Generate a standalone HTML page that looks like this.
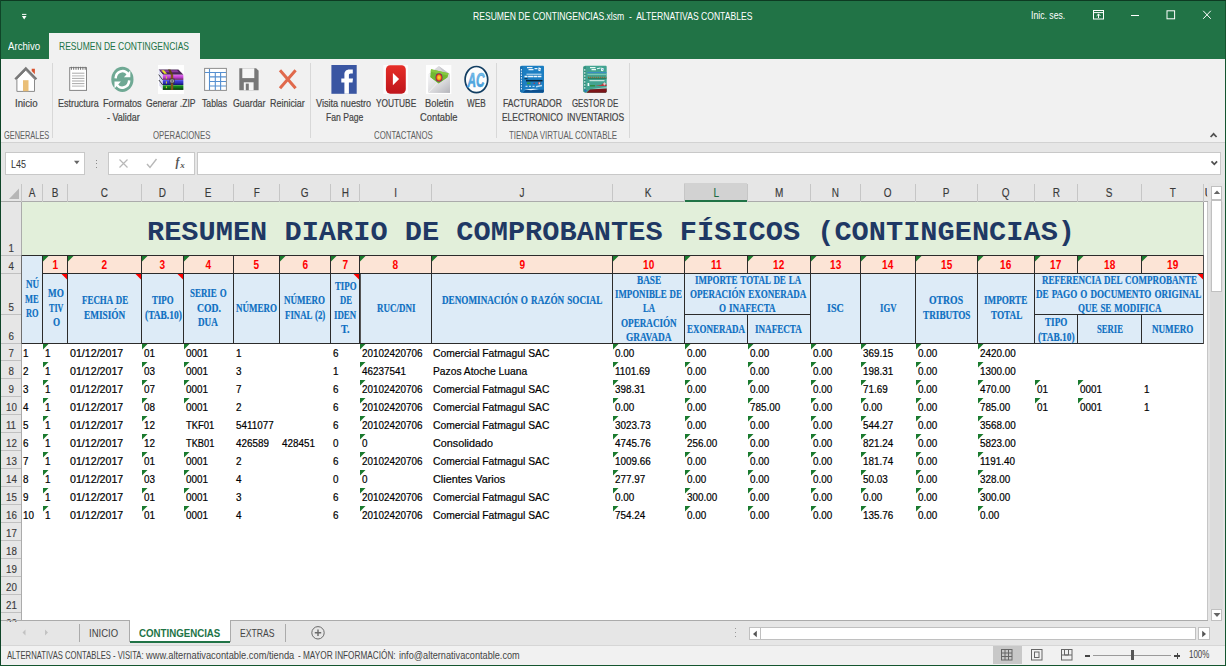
<!DOCTYPE html>
<html lang="es"><head><meta charset="utf-8"><title>RESUMEN DE CONTINGENCIAS</title>
<style>
html,body{margin:0;padding:0}
body{width:1226px;height:666px;position:relative;overflow:hidden;background:#f1f1f1;font-family:"Liberation Sans",sans-serif}
body>div,body>span,body>svg{position:absolute}
.t{white-space:pre;transform-origin:0 50%;display:block}
.s{font-family:"Liberation Sans",sans-serif}
.sb{font-family:"Liberation Sans",sans-serif;font-weight:700}
.r{font-family:"Liberation Serif",serif}
.rb{font-family:"Liberation Serif",serif;font-weight:700}
.m{font-family:"Liberation Mono",monospace}
.mb{font-family:"Liberation Mono",monospace;font-weight:700}
</style></head>
<body>
<div style="left:0px;top:0px;width:1226px;height:60px;background:#217346;"></div>
<div style="left:0px;top:0px;width:1226px;height:1px;background:#0d3a22;"></div>
<div style="left:49px;top:33px;width:151px;height:27px;background:#f1f1f1;"></div>
<div style="left:0px;top:59px;width:1226px;height:84px;background:#f1f1f1;"></div>
<div style="left:0px;top:142px;width:1226px;height:1px;background:#d2d2d2;"></div>
<div style="left:0px;top:143px;width:1226px;height:40px;background:#e6e6e6;"></div>
<div style="left:0px;top:183px;width:1226px;height:19px;background:#e6e6e6;"></div>
<div style="left:0px;top:202px;width:22px;height:418px;background:#e6e6e6;"></div>
<div style="left:22px;top:202px;width:1186px;height:418px;background:#fff;"></div>
<div style="left:1208px;top:183px;width:18px;height:437px;background:#e4e4e4;"></div>
<div style="left:0px;top:620px;width:1226px;height:26px;background:#e6e6e6;"></div>
<div style="left:0px;top:645px;width:1226px;height:21px;background:#f1f1f1;"></div>
<span class="t s" style="left:472.60px;top:9px;font-size:11.5px;line-height:15px;color:#fff;transform:scaleX(0.7466);">RESUMEN DE CONTINGENCIAS.xlsm  -  ALTERNATIVAS CONTABLES</span>
<span class="t s" style="left:1030.80px;top:8px;font-size:11.5px;line-height:15px;color:#fff;transform:scaleX(0.7537);">Inic. ses.</span>
<svg style="left:19px;top:11px" width="10" height="10" viewBox="0 0 10 10"><path d="M3 3.400h4.400" stroke="#fff" stroke-width="1" fill="none"/><path d="M2.900 5h4.600L5.200 8.400z" fill="#fff"/></svg>
<svg style="left:1090px;top:7px" width="130" height="16" viewBox="0 0 130 16" fill="none" stroke="#fff" stroke-width="1"><rect x="3.5" y="3.5" width="10" height="8.5"/><path d="M3.5 5.6h10"/><path d="M8.5 11V7.2M6.6 8.9l1.9-1.9 1.9 1.9"/><path d="M41 8.5h8"/><rect x="77" y="3.8" width="7.6" height="8"/><path d="M113.2 3.8l7.6 8M120.8 3.8l-7.6 8"/></svg>
<span class="t s" style="left:8.20px;top:39px;font-size:11.5px;line-height:15px;color:#fff;transform:scaleX(0.8371);">Archivo</span>
<span class="t s" style="left:59.20px;top:39px;font-size:11.5px;line-height:15px;color:#217346;transform:scaleX(0.7398);">RESUMEN DE CONTINGENCIAS</span>
<span class="t s" style="left:14.50px;top:96px;font-size:11px;line-height:14px;color:#444444;transform:scaleX(0.8762);-webkit-text-stroke:.2px #444;">Inicio</span>
<span class="t s" style="left:57.70px;top:96px;font-size:11px;line-height:14px;color:#444444;transform:scaleX(0.8119);-webkit-text-stroke:.2px #444;">Estructura</span>
<span class="t s" style="left:103.30px;top:96px;font-size:11px;line-height:14px;color:#444444;transform:scaleX(0.8331);-webkit-text-stroke:.2px #444;">Formatos</span>
<span class="t s" style="left:106.70px;top:110px;font-size:11px;line-height:14px;color:#444444;transform:scaleX(0.8146);-webkit-text-stroke:.2px #444;">- Validar</span>
<span class="t s" style="left:146.20px;top:96px;font-size:11px;line-height:14px;color:#444444;transform:scaleX(0.7801);-webkit-text-stroke:.2px #444;">Generar .ZIP</span>
<span class="t s" style="left:202.40px;top:96px;font-size:11px;line-height:14px;color:#444444;transform:scaleX(0.7862);-webkit-text-stroke:.2px #444;">Tablas</span>
<span class="t s" style="left:233.20px;top:96px;font-size:11px;line-height:14px;color:#444444;transform:scaleX(0.8029);-webkit-text-stroke:.2px #444;">Guardar</span>
<span class="t s" style="left:270.00px;top:96px;font-size:11px;line-height:14px;color:#444444;transform:scaleX(0.8132);-webkit-text-stroke:.2px #444;">Reiniciar</span>
<span class="t s" style="left:315.80px;top:96px;font-size:11px;line-height:14px;color:#444444;transform:scaleX(0.8307);-webkit-text-stroke:.2px #444;">Visita nuestro</span>
<span class="t s" style="left:325.70px;top:110px;font-size:11px;line-height:14px;color:#444444;transform:scaleX(0.7820);-webkit-text-stroke:.2px #444;">Fan Page</span>
<span class="t s" style="left:375.80px;top:96px;font-size:11px;line-height:14px;color:#444444;transform:scaleX(0.7560);-webkit-text-stroke:.2px #444;">YOUTUBE</span>
<span class="t s" style="left:424.60px;top:96px;font-size:11px;line-height:14px;color:#444444;transform:scaleX(0.8503);-webkit-text-stroke:.2px #444;">Boletin</span>
<span class="t s" style="left:420.30px;top:110px;font-size:11px;line-height:14px;color:#444444;transform:scaleX(0.8494);-webkit-text-stroke:.2px #444;">Contable</span>
<span class="t s" style="left:466.90px;top:96px;font-size:11px;line-height:14px;color:#444444;transform:scaleX(0.7423);-webkit-text-stroke:.2px #444;">WEB</span>
<span class="t s" style="left:503.20px;top:96px;font-size:11px;line-height:14px;color:#444444;transform:scaleX(0.7759);-webkit-text-stroke:.2px #444;">FACTURADOR</span>
<span class="t s" style="left:501.60px;top:110px;font-size:11px;line-height:14px;color:#444444;transform:scaleX(0.7652);-webkit-text-stroke:.2px #444;">ELECTRONICO</span>
<span class="t s" style="left:571.90px;top:96px;font-size:11px;line-height:14px;color:#444444;transform:scaleX(0.7153);-webkit-text-stroke:.2px #444;">GESTOR DE</span>
<span class="t s" style="left:566.60px;top:110px;font-size:11px;line-height:14px;color:#444444;transform:scaleX(0.7742);-webkit-text-stroke:.2px #444;">INVENTARIOS</span>
<span class="t s" style="left:4.00px;top:128px;font-size:10.5px;line-height:14px;color:#606060;transform:scaleX(0.7057);">GENERALES</span>
<span class="t s" style="left:152.80px;top:128px;font-size:10.5px;line-height:14px;color:#606060;transform:scaleX(0.7453);">OPERACIONES</span>
<span class="t s" style="left:374.20px;top:128px;font-size:10.5px;line-height:14px;color:#606060;transform:scaleX(0.7448);">CONTACTANOS</span>
<span class="t s" style="left:508.50px;top:128px;font-size:10.5px;line-height:14px;color:#606060;transform:scaleX(0.7541);">TIENDA VIRTUAL CONTABLE</span>
<div style="left:52px;top:63px;width:1px;height:75px;background:#d8d8d8;"></div>
<div style="left:310px;top:63px;width:1px;height:75px;background:#d8d8d8;"></div>
<div style="left:496px;top:63px;width:1px;height:75px;background:#d8d8d8;"></div>
<div style="left:629px;top:63px;width:1px;height:75px;background:#d8d8d8;"></div>
<svg style="left:1209px;top:131px" width="10" height="8" viewBox="0 0 10 8"><path d="M1.600 6l3-3.200 3 3.200" stroke="#505050" stroke-width="1.700" fill="none"/></svg>
<svg style="left:13px;top:65px" width="27" height="29" viewBox="0 0 27 29">
<path d="M18.700 3.700h3.200v5.500l-3.200-3.200z" fill="#d9532e"/>
<path d="M3.900 14.200V26.400h17.600V14.200L12.800 5.200z" fill="#fff" stroke="#8a8a8a" stroke-width="1"/>
<path d="M2.200 14.300L12.800 3.500l10.600 10.800" fill="none" stroke="#787878" stroke-width="2.300"/>
<rect x="10" y="15.200" width="5.500" height="11" fill="#eabf78"/>
</svg>
<svg style="left:68px;top:65px" width="21" height="28" viewBox="0 0 21 28">
<rect x="1.700" y="2.600" width="16.800" height="22.800" fill="#fff" stroke="#858585" stroke-width="1"/>
<path d="M3.400 1.800v3M5.700 1.800v3M8 1.800v3M10.300 1.800v3M12.600 1.800v3M14.900 1.800v3M17.200 1.800v3" stroke="#6f6f6f" stroke-width="1"/>
<path d="M4 8.200h12.400M4 13.400h12.400M4 18.600h12.400" stroke="#9f9f9f" stroke-width="0.9"/>
<path d="M4 10.800h12.400M4 16h12.400M4 21.200h12.400" stroke="#c4c4c4" stroke-width="1.300"/>
</svg>
<svg style="left:110px;top:66px" width="25" height="27" viewBox="0 0 25 27">
<ellipse cx="12.400" cy="13.400" rx="11.100" ry="12.600" fill="#6fa994"/>
<g fill="none" stroke="#fff" stroke-width="2.500">
<path d="M5.600 12.400a6.900 7.600 0 0 1 12.400-4.200"/>
<path d="M19.200 14.400a6.900 7.600 0 0 1-12.400 4.200"/>
</g>
<path d="M20.300 4.400v6.800h-6.400z" fill="#fff"/>
<path d="M4.500 22.400v-6.800h6.400z" fill="#fff"/>
</svg>
<svg style="left:158px;top:65px" width="26" height="29" viewBox="0 0 26 29">
<defs>
<linearGradient id="wp" x1="0" y1="0" x2="0" y2="1"><stop offset="0" stop-color="#e468f4"/><stop offset=".55" stop-color="#b83cc8"/><stop offset="1" stop-color="#5a2660"/></linearGradient>
<linearGradient id="wb" x1="0" y1="0" x2="0" y2="1"><stop offset="0" stop-color="#4a48e8"/><stop offset=".6" stop-color="#2c2cb8"/><stop offset="1" stop-color="#161660"/></linearGradient>
<linearGradient id="wg" x1="0" y1="0" x2="0" y2="1"><stop offset="0" stop-color="#1a9a20"/><stop offset=".6" stop-color="#0e6a14"/><stop offset="1" stop-color="#042c06"/></linearGradient>
</defs>
<rect width="26" height="29" fill="#fefefe"/>
<path d="M.6 4.600h19.800l5 5.200H4.800z" fill="#4b2458"/>
<path d="M2.200 5.200h16.800l1.800 2H4z" fill="#8a3aa0"/>
<path d="M.6 4.600l4.200 5.200v15.100L1.300 20.600z" fill="#d8d8ee"/>
<path d="M.7 9.600l4 5.300M.9 15l3.800 5" stroke="#333" stroke-width=".9"/>
<rect x="4.800" y="9.800" width="20.600" height="5.100" fill="url(#wp)"/>
<rect x="4.800" y="15.100" width="20.600" height="4.900" fill="url(#wb)"/>
<rect x="4.800" y="20.200" width="20.600" height="4.700" fill="url(#wg)"/>
<path d="M3.400 5.300h2.600l3 3.400H6.200z" fill="#e4e420"/>
<path d="M8.400 11.400v2.200M8.400 16.400v2.200M8.400 21.400v1.800" stroke="#d8d83a" stroke-width="1"/>
<path d="M10 4.600h2.400l2.800 5.200h-2.400z" fill="#5e4410"/>
<rect x="12.800" y="9.800" width="2.400" height="15.100" fill="#83561a"/>
<rect x="12" y="14.100" width="4.100" height="3.800" fill="#d4d4dc" stroke="#2a2a2a" stroke-width=".8"/>
<rect x="13.300" y="15.200" width="1.600" height="1.600" fill="#444"/>
</svg>
<svg style="left:203px;top:67px" width="25" height="25" viewBox="0 0 25 25">
<rect x="1.600" y="1.400" width="21.800" height="22" fill="#fff" stroke="#8e8e8e" stroke-width="1"/>
<path d="M6.500 2v21M12.300 5.500v17.500M17.600 5.500v17.500" stroke="#558fd0" stroke-width="1.100"/>
<path d="M2 5.500h21M6.500 9.900h16.500M6.500 14.500h16.500M6.500 19h16.500" stroke="#558fd0" stroke-width="1.100"/>
</svg>
<svg style="left:238px;top:67px" width="22" height="25" viewBox="0 0 22 25">
<path d="M1.300 1.300h16.800l2.500 2.500v19.400H1.300z" fill="#787878"/>
<rect x="4.300" y="1.300" width="12" height="9.800" fill="#f6f6f6"/>
<rect x="5.800" y="15.300" width="9.800" height="7.900" fill="#f6f6f6"/>
<rect x="7.800" y="16.600" width="3" height="6.600" fill="#787878"/>
</svg>
<svg style="left:277px;top:67px" width="22" height="24" viewBox="0 0 22 24">
<path d="M3 3.200l15.600 18M18.600 3.200L3 21.200" stroke="#e0694c" stroke-width="3" fill="none"/>
</svg>
<svg style="left:331px;top:65px" width="26" height="29" viewBox="0 0 26 29">
<rect x=".4" width="25.300" height="28.800" fill="#3a56a2"/>
<path d="M21.800 4.400h-3.300c-3.600 0-5.100 2.100-5.100 5.100v4h-3.100v4.100h3.100V28.800h4.500V17.600h3.600l.5-4.100h-4.100V10.400c0-1.200.4-1.900 1.700-1.900h2.200z" fill="#fff"/>
</svg>
<svg style="left:383px;top:65px" width="25" height="29" viewBox="0 0 25 29">
<defs><linearGradient id="yt" x1="0" y1="0" x2="0" y2="1"><stop offset="0" stop-color="#e62e28"/><stop offset="1" stop-color="#bf151b"/></linearGradient></defs>
<rect x=".4" width="24.600" height="29" fill="#fcfcfc"/>
<rect x="2.900" y="0.200" width="19.900" height="28.500" rx="4.200" ry="4.600" fill="url(#yt)"/>
<path d="M9.900 8v12.200l6.200-6.100z" fill="#fff"/>
</svg>
<svg style="left:426px;top:65px" width="26" height="29" viewBox="0 0 26 29">
<defs><linearGradient id="env" x1="0" y1="0" x2="1" y2="1"><stop offset="0" stop-color="#f4f4f6"/><stop offset=".5" stop-color="#dcdcdf"/><stop offset="1" stop-color="#b4b4ba"/></linearGradient>
<radialGradient id="sun"><stop offset="0" stop-color="#ffe63a"/><stop offset=".5" stop-color="#f59a1c"/><stop offset=".8" stop-color="#c8282c"/><stop offset="1" stop-color="#6a2a7a"/></radialGradient></defs>
<rect width="25.300" height="29" fill="#fefefe"/>
<path d="M2.300 9.500L12.700 1.100 24 9.300v4z" fill="#d9d9dc"/>
<path d="M12.700 1.100L24 9.300 18 8.200z" fill="#c6c6ca"/>
<path d="M2.300 8.800h21.700v18.900H2.300z" fill="url(#env)"/>
<path d="M5 4.300l17.500 4-1 4.800-8.900 5.700-8.400-6.500z" fill="#72b832"/>
<path d="M5 4.300l17.500 4-.5 2.300L4.700 6.800z" fill="#86c840"/>
<ellipse cx="13" cy="12.500" rx="3.500" ry="4.300" fill="url(#sun)"/>
<path d="M2.300 11l10.300 7.800L24 10.800V27.700H2.300z" fill="url(#env)"/>
<path d="M2.300 27.700l8.800-9.500" stroke="#f4f4f4" stroke-width=".8" fill="none"/>
</svg>
<svg style="left:463px;top:64px" width="27" height="31" viewBox="0 0 27 31">
<defs><linearGradient id="ac" x1="0" y1="0" x2="0" y2="1"><stop offset="0" stop-color="#8ccaee"/><stop offset="1" stop-color="#3292d6"/></linearGradient></defs>
<ellipse cx="13.400" cy="15.600" rx="11.300" ry="13.100" fill="#fdfdfd" stroke="#123e62" stroke-width="1.700"/>
<text x="4.600" y="22.500" font-family="Liberation Sans, sans-serif" font-weight="700" font-style="italic" font-size="20" fill="url(#ac)" stroke="#4ea4de" stroke-width=".7" textLength="17" lengthAdjust="spacingAndGlyphs">AC</text>
</svg>
<svg style="left:519px;top:65px" width="26" height="29" viewBox="0 0 26 29">
<path d="M1 1.800l1.600-1h21.700l.7.800v25.200l-.8.900H2.400L1 26.600z" fill="#1c7ec2"/>
<path d="M1 1.800l2.600-.6v26.200L1 26.600z" fill="#1a70b0"/>
<path d="M2.400 4v21" stroke="#e6f2fb" stroke-width="1" stroke-dasharray="1.600 1.100"/>
<path d="M8 2.600h5.500M9.500 4.600h5M15.500 3.600h3" stroke="#e6f2fb" stroke-width="1.100"/>
<path d="M19.600 2.200l2.500 1.400-.8 2.600-2-.4z" fill="#fff"/><path d="M20.400 3.800l1 .6-.4 1z" fill="#0c4a80"/>
<path d="M7.500 9.200h15" stroke="#cfe6f6" stroke-width="1"/>
<path d="M5.500 11.600h17.500" stroke="#f2f8fc" stroke-width="1.500" stroke-dasharray="3 .6 5 .4 4 .5"/>
<path d="M5.500 13.700h3" stroke="#0a2a44" stroke-width="1"/>
<path d="M7 15.700h16.500" stroke="#08243a" stroke-width="1.500"/>
<path d="M8 18.300h3.500" stroke="#2f9a4a" stroke-width="1.800"/><path d="M14.600 18.300h1.200" stroke="#b0343c" stroke-width="1.300"/><path d="M19.200 18.300h2.200" stroke="#e04038" stroke-width="2"/><path d="M19.900 17.600h.8v1.600h-.8z" fill="#fff"/>
<path d="M6.500 21.400h2M10 21.400h2M13.500 21.400h2M17 21.700l6-1.200" stroke="#b8daf2" stroke-width="1.400"/>
<path d="M3.600 27.700l3.400-3h17.800v2.100l-.8.900z" fill="#0c4f8e"/>
<path d="M5 24.400l9-.6 6 .2-8 1.300z" fill="#eaf4fb"/>
</svg>
<svg style="left:582px;top:65px" width="26" height="29" viewBox="0 0 26 29">
<path d="M1.400 1.800l1.600-1h21l.7.800v25.200l-.8.900H2.800l-1.400-1.100z" fill="#42a391"/>
<path d="M1.400 1.800l2.600-.6v26.200l-2.600-.8z" fill="#36917f"/>
<path d="M2.800 4v20" stroke="#e4f5f0" stroke-width="1" stroke-dasharray="1.800 1.200"/>
<path d="M8 2.600h5.500M9.500 4.600h4.500M15 3.800l3.500-.8" stroke="#e8f7f3" stroke-width="1.100"/>
<path d="M19.400 2.400l2.600 1.300-1 2.600-2-.5z" fill="#fff"/><path d="M20.200 3.800l1.200.5-.5 1.100z" fill="#2a70c8"/>
<path d="M5.500 7.600h19" stroke="#3a86d0" stroke-width=".9"/>
<path d="M5.500 9.400h19" stroke="#7cc6b6" stroke-width="1.200"/>
<path d="M6 12.400h18.500" stroke="#8a6a3a" stroke-width="1.300" stroke-dasharray="1.200 .8"/>
<path d="M6 13.600h18.500" stroke="#2a7a5a" stroke-width="1"/>
<path d="M7.500 15.700h15" stroke="#e0f4ee" stroke-width="1"/>
<path d="M5.600 18h1.600v3H5.600z" fill="#f2faf8"/>
<path d="M8 20.800h5" stroke="#2e8a3a" stroke-width="1.400"/>
<path d="M13 20.900l6-.9 3-2.200.8 1.400 1.800.2v1.600z" fill="#b8383c"/>
<path d="M22.400 17.400v3M21 18.900h3" stroke="#f4d8d8" stroke-width=".9"/>
<path d="M10 23.600l14.600-1.200v1.200z" fill="#eaf7f3"/>
<path d="M4.400 27.700l3.600-3.200 16.700-1v3.300l-.8.900z" fill="#7d1519"/>
<path d="M2.600 24.200l2.400 1.200-1.200 1.600-1.200-.6z" fill="#2a70c8"/>
</svg>
<div style="left:5px;top:152px;width:80px;height:23px;background:#fff;border:1px solid #c8c8c8;box-sizing:border-box;"></div>
<span class="t s" style="left:10.80px;top:157px;font-size:11.5px;line-height:15px;color:#333;transform:scaleX(0.7818);">L45</span>
<svg style="left:73px;top:160px" width="8" height="5" viewBox="0 0 8 5"><path d="M1 .8h5.600L3.800 4.200z" fill="#666"/></svg>
<div style="left:96px;top:160px;width:1px;height:1px;background:#8a8a8a;"></div>
<div style="left:96px;top:163px;width:1px;height:1px;background:#8a8a8a;"></div>
<div style="left:96px;top:167px;width:1px;height:1px;background:#8a8a8a;"></div>
<div style="left:108px;top:152px;width:87px;height:23px;background:#fff;border:1px solid #c8c8c8;box-sizing:border-box;"></div>
<svg style="left:118px;top:157px" width="70" height="13" viewBox="0 0 70 13" fill="none"><path d="M1.5 2.5l8 8M9.5 2.5l-8 8" stroke="#b8b8b8" stroke-width="1.2"/><path d="M29 7l3 3.5 6.5-8.5" stroke="#b8b8b8" stroke-width="1.4"/></svg>
<span class="t rb" style="left:175.60px;top:155px;font-size:11.5px;line-height:15px;color:#555;font-style:italic;">f</span>
<span class="t rb" style="left:180.20px;top:159px;font-size:9px;line-height:12px;color:#555;font-style:italic;">x</span>
<div style="left:197px;top:152px;width:1024px;height:23px;background:#fff;border:1px solid #c8c8c8;box-sizing:border-box;"></div>
<svg style="left:1209px;top:159px" width="10" height="8" viewBox="0 0 10 8"><path d="M2.500 2.300l2.800 3 2.800-3" stroke="#505050" stroke-width="1.700" fill="none"/></svg>
<div style="left:684px;top:183px;width:63px;height:18px;background:#d2d2d2;"></div>
<div style="left:0px;top:201px;width:1208px;height:1px;background:#ababab;"></div>
<div style="left:684px;top:200px;width:63px;height:2px;background:#217346;"></div>
<div style="left:21px;top:184px;width:1px;height:18px;background:#c6c6c6;"></div>
<span class="t s" style="left:27.93px;top:185px;font-size:12.2px;line-height:16px;color:#3a3a3a;transform:scaleX(.82);transform-origin:50% 50%;-webkit-text-stroke:.15px #3a3a3a;">A</span>
<div style="left:42px;top:184px;width:1px;height:18px;background:#c6c6c6;"></div>
<span class="t s" style="left:50.93px;top:185px;font-size:12.2px;line-height:16px;color:#3a3a3a;transform:scaleX(.82);transform-origin:50% 50%;-webkit-text-stroke:.15px #3a3a3a;">B</span>
<div style="left:67px;top:184px;width:1px;height:18px;background:#c6c6c6;"></div>
<span class="t s" style="left:100.09px;top:185px;font-size:12.2px;line-height:16px;color:#3a3a3a;transform:scaleX(.82);transform-origin:50% 50%;-webkit-text-stroke:.15px #3a3a3a;">C</span>
<div style="left:141px;top:184px;width:1px;height:18px;background:#c6c6c6;"></div>
<span class="t s" style="left:158.09px;top:185px;font-size:12.2px;line-height:16px;color:#3a3a3a;transform:scaleX(.82);transform-origin:50% 50%;-webkit-text-stroke:.15px #3a3a3a;">D</span>
<div style="left:183px;top:184px;width:1px;height:18px;background:#c6c6c6;"></div>
<span class="t s" style="left:204.43px;top:185px;font-size:12.2px;line-height:16px;color:#3a3a3a;transform:scaleX(.82);transform-origin:50% 50%;-webkit-text-stroke:.15px #3a3a3a;">E</span>
<div style="left:233px;top:184px;width:1px;height:18px;background:#c6c6c6;"></div>
<span class="t s" style="left:252.77px;top:185px;font-size:12.2px;line-height:16px;color:#3a3a3a;transform:scaleX(.82);transform-origin:50% 50%;-webkit-text-stroke:.15px #3a3a3a;">F</span>
<div style="left:279px;top:184px;width:1px;height:18px;background:#c6c6c6;"></div>
<span class="t s" style="left:300.26px;top:185px;font-size:12.2px;line-height:16px;color:#3a3a3a;transform:scaleX(.82);transform-origin:50% 50%;-webkit-text-stroke:.15px #3a3a3a;">G</span>
<div style="left:330px;top:184px;width:1px;height:18px;background:#c6c6c6;"></div>
<span class="t s" style="left:340.59px;top:185px;font-size:12.2px;line-height:16px;color:#3a3a3a;transform:scaleX(.82);transform-origin:50% 50%;-webkit-text-stroke:.15px #3a3a3a;">H</span>
<div style="left:359px;top:184px;width:1px;height:18px;background:#c6c6c6;"></div>
<span class="t s" style="left:393.81px;top:185px;font-size:12.2px;line-height:16px;color:#3a3a3a;transform:scaleX(.82);transform-origin:50% 50%;-webkit-text-stroke:.15px #3a3a3a;">I</span>
<div style="left:431px;top:184px;width:1px;height:18px;background:#c6c6c6;"></div>
<span class="t s" style="left:518.95px;top:185px;font-size:12.2px;line-height:16px;color:#3a3a3a;transform:scaleX(.82);transform-origin:50% 50%;-webkit-text-stroke:.15px #3a3a3a;">J</span>
<div style="left:612px;top:184px;width:1px;height:18px;background:#c6c6c6;"></div>
<span class="t s" style="left:644.43px;top:185px;font-size:12.2px;line-height:16px;color:#3a3a3a;transform:scaleX(.82);transform-origin:50% 50%;-webkit-text-stroke:.15px #3a3a3a;">K</span>
<div style="left:684px;top:184px;width:1px;height:18px;background:#c6c6c6;"></div>
<span class="t s" style="left:712.61px;top:185px;font-size:12.2px;line-height:16px;color:#1e6b41;transform:scaleX(.82);transform-origin:50% 50%;-webkit-text-stroke:.15px #1e6b41;">L</span>
<div style="left:747px;top:184px;width:1px;height:18px;background:#c6c6c6;"></div>
<span class="t s" style="left:773.92px;top:185px;font-size:12.2px;line-height:16px;color:#3a3a3a;transform:scaleX(.82);transform-origin:50% 50%;-webkit-text-stroke:.15px #3a3a3a;">M</span>
<div style="left:810px;top:184px;width:1px;height:18px;background:#c6c6c6;"></div>
<span class="t s" style="left:831.09px;top:185px;font-size:12.2px;line-height:16px;color:#3a3a3a;transform:scaleX(.82);transform-origin:50% 50%;-webkit-text-stroke:.15px #3a3a3a;">N</span>
<div style="left:860px;top:184px;width:1px;height:18px;background:#c6c6c6;"></div>
<span class="t s" style="left:883.26px;top:185px;font-size:12.2px;line-height:16px;color:#3a3a3a;transform:scaleX(.82);transform-origin:50% 50%;-webkit-text-stroke:.15px #3a3a3a;">O</span>
<div style="left:915px;top:184px;width:1px;height:18px;background:#c6c6c6;"></div>
<span class="t s" style="left:942.43px;top:185px;font-size:12.2px;line-height:16px;color:#3a3a3a;transform:scaleX(.82);transform-origin:50% 50%;-webkit-text-stroke:.15px #3a3a3a;">P</span>
<div style="left:977px;top:184px;width:1px;height:18px;background:#c6c6c6;"></div>
<span class="t s" style="left:1001.26px;top:185px;font-size:12.2px;line-height:16px;color:#3a3a3a;transform:scaleX(.82);transform-origin:50% 50%;-webkit-text-stroke:.15px #3a3a3a;">Q</span>
<div style="left:1034px;top:184px;width:1px;height:18px;background:#c6c6c6;"></div>
<span class="t s" style="left:1051.59px;top:185px;font-size:12.2px;line-height:16px;color:#3a3a3a;transform:scaleX(.82);transform-origin:50% 50%;-webkit-text-stroke:.15px #3a3a3a;">R</span>
<div style="left:1077px;top:184px;width:1px;height:18px;background:#c6c6c6;"></div>
<span class="t s" style="left:1105.43px;top:185px;font-size:12.2px;line-height:16px;color:#3a3a3a;transform:scaleX(.82);transform-origin:50% 50%;-webkit-text-stroke:.15px #3a3a3a;">S</span>
<div style="left:1141px;top:184px;width:1px;height:18px;background:#c6c6c6;"></div>
<span class="t s" style="left:1168.77px;top:185px;font-size:12.2px;line-height:16px;color:#3a3a3a;transform:scaleX(.82);transform-origin:50% 50%;-webkit-text-stroke:.15px #3a3a3a;">T</span>
<div style="left:1203px;top:184px;width:1px;height:18px;background:#c6c6c6;"></div>
<div style="left:1207px;top:202px;width:1px;height:418px;background:#c6c6c6;"></div>
<span class="t s" style="left:1204.60px;top:185px;font-size:12.2px;line-height:16px;color:#3a3a3a;clip-path:inset(0 6.200px 0 0);">U</span>
<svg style="left:8px;top:187px" width="12" height="13" viewBox="0 0 12 13"><path d="M11 1.500v10.500H1z" fill="#b6b6b6"/></svg>
<div style="left:21px;top:202px;width:1px;height:418px;background:#ababab;"></div>
<div style="left:1px;top:255px;width:20px;height:1px;background:#c0c0c0;"></div>
<span class="t s" style="left:7.80px;top:241px;font-size:11.5px;line-height:15px;color:#3a3a3a;transform:scaleX(.85);transform-origin:50% 50%;-webkit-text-stroke:.15px #3a3a3a;">1</span>
<div style="left:1px;top:273px;width:20px;height:1px;background:#c0c0c0;"></div>
<span class="t s" style="left:7.80px;top:259px;font-size:11.5px;line-height:15px;color:#3a3a3a;transform:scaleX(.85);transform-origin:50% 50%;-webkit-text-stroke:.15px #3a3a3a;">4</span>
<div style="left:1px;top:314px;width:20px;height:1px;background:#c0c0c0;"></div>
<span class="t s" style="left:7.80px;top:300px;font-size:11.5px;line-height:15px;color:#3a3a3a;transform:scaleX(.85);transform-origin:50% 50%;-webkit-text-stroke:.15px #3a3a3a;">5</span>
<div style="left:1px;top:343px;width:20px;height:1px;background:#c0c0c0;"></div>
<span class="t s" style="left:7.80px;top:329px;font-size:11.5px;line-height:15px;color:#3a3a3a;transform:scaleX(.85);transform-origin:50% 50%;-webkit-text-stroke:.15px #3a3a3a;">6</span>
<div style="left:1px;top:360px;width:20px;height:1px;background:#c0c0c0;"></div>
<span class="t s" style="left:7.80px;top:346px;font-size:11.5px;line-height:15px;color:#3a3a3a;transform:scaleX(.85);transform-origin:50% 50%;-webkit-text-stroke:.15px #3a3a3a;">7</span>
<div style="left:1px;top:378px;width:20px;height:1px;background:#c0c0c0;"></div>
<span class="t s" style="left:7.80px;top:364px;font-size:11.5px;line-height:15px;color:#3a3a3a;transform:scaleX(.85);transform-origin:50% 50%;-webkit-text-stroke:.15px #3a3a3a;">8</span>
<div style="left:1px;top:396px;width:20px;height:1px;background:#c0c0c0;"></div>
<span class="t s" style="left:7.80px;top:382px;font-size:11.5px;line-height:15px;color:#3a3a3a;transform:scaleX(.85);transform-origin:50% 50%;-webkit-text-stroke:.15px #3a3a3a;">9</span>
<div style="left:1px;top:414px;width:20px;height:1px;background:#c0c0c0;"></div>
<span class="t s" style="left:4.60px;top:400px;font-size:11.5px;line-height:15px;color:#3a3a3a;transform:scaleX(.85);transform-origin:50% 50%;-webkit-text-stroke:.15px #3a3a3a;">10</span>
<div style="left:1px;top:432px;width:20px;height:1px;background:#c0c0c0;"></div>
<span class="t s" style="left:5.03px;top:418px;font-size:11.5px;line-height:15px;color:#3a3a3a;transform:scaleX(.85);transform-origin:50% 50%;-webkit-text-stroke:.15px #3a3a3a;">11</span>
<div style="left:1px;top:450px;width:20px;height:1px;background:#c0c0c0;"></div>
<span class="t s" style="left:4.60px;top:436px;font-size:11.5px;line-height:15px;color:#3a3a3a;transform:scaleX(.85);transform-origin:50% 50%;-webkit-text-stroke:.15px #3a3a3a;">12</span>
<div style="left:1px;top:468px;width:20px;height:1px;background:#c0c0c0;"></div>
<span class="t s" style="left:4.60px;top:454px;font-size:11.5px;line-height:15px;color:#3a3a3a;transform:scaleX(.85);transform-origin:50% 50%;-webkit-text-stroke:.15px #3a3a3a;">13</span>
<div style="left:1px;top:486px;width:20px;height:1px;background:#c0c0c0;"></div>
<span class="t s" style="left:4.60px;top:472px;font-size:11.5px;line-height:15px;color:#3a3a3a;transform:scaleX(.85);transform-origin:50% 50%;-webkit-text-stroke:.15px #3a3a3a;">14</span>
<div style="left:1px;top:504px;width:20px;height:1px;background:#c0c0c0;"></div>
<span class="t s" style="left:4.60px;top:490px;font-size:11.5px;line-height:15px;color:#3a3a3a;transform:scaleX(.85);transform-origin:50% 50%;-webkit-text-stroke:.15px #3a3a3a;">15</span>
<div style="left:1px;top:522px;width:20px;height:1px;background:#c0c0c0;"></div>
<span class="t s" style="left:4.60px;top:508px;font-size:11.5px;line-height:15px;color:#3a3a3a;transform:scaleX(.85);transform-origin:50% 50%;-webkit-text-stroke:.15px #3a3a3a;">16</span>
<div style="left:1px;top:540px;width:20px;height:1px;background:#c0c0c0;"></div>
<span class="t s" style="left:4.60px;top:526px;font-size:11.5px;line-height:15px;color:#3a3a3a;transform:scaleX(.85);transform-origin:50% 50%;-webkit-text-stroke:.15px #3a3a3a;">17</span>
<div style="left:1px;top:558px;width:20px;height:1px;background:#c0c0c0;"></div>
<span class="t s" style="left:4.60px;top:544px;font-size:11.5px;line-height:15px;color:#3a3a3a;transform:scaleX(.85);transform-origin:50% 50%;-webkit-text-stroke:.15px #3a3a3a;">18</span>
<div style="left:1px;top:576px;width:20px;height:1px;background:#c0c0c0;"></div>
<span class="t s" style="left:4.60px;top:562px;font-size:11.5px;line-height:15px;color:#3a3a3a;transform:scaleX(.85);transform-origin:50% 50%;-webkit-text-stroke:.15px #3a3a3a;">19</span>
<div style="left:1px;top:594px;width:20px;height:1px;background:#c0c0c0;"></div>
<span class="t s" style="left:4.60px;top:580px;font-size:11.5px;line-height:15px;color:#3a3a3a;transform:scaleX(.85);transform-origin:50% 50%;-webkit-text-stroke:.15px #3a3a3a;">20</span>
<div style="left:1px;top:612px;width:20px;height:1px;background:#c0c0c0;"></div>
<span class="t s" style="left:4.60px;top:598px;font-size:11.5px;line-height:15px;color:#3a3a3a;transform:scaleX(.85);transform-origin:50% 50%;-webkit-text-stroke:.15px #3a3a3a;">21</span>
<span class="t s" style="left:4.60px;top:616px;font-size:11.5px;line-height:15px;color:#3a3a3a;transform:scaleX(.85);transform-origin:50% 50%;-webkit-text-stroke:.15px #3a3a3a;clip-path:inset(0 0 9px 0);">22</span>
<div style="left:22px;top:202px;width:1181px;height:53px;background:#e2efda;"></div>
<div style="left:22px;top:256px;width:20px;height:87px;background:#ddebf7;"></div>
<div style="left:42px;top:256px;width:1161px;height:17px;background:#fce4d6;"></div>
<div style="left:42px;top:274px;width:1161px;height:69px;background:#ddebf7;"></div>
<div style="left:22px;top:255px;width:1181px;height:1px;background:#2b2b2b;"></div>
<div style="left:42px;top:273px;width:1161px;height:1px;background:#2b2b2b;"></div>
<div style="left:22px;top:343px;width:1182px;height:1px;background:#2b2b2b;"></div>
<div style="left:684px;top:314px;width:126px;height:1px;background:#2b2b2b;"></div>
<div style="left:1034px;top:314px;width:169px;height:1px;background:#2b2b2b;"></div>
<div style="left:1203px;top:202px;width:1px;height:53px;background:#9c9c9c;"></div>
<div style="left:1203px;top:255px;width:1px;height:89px;background:#4a4a4a;"></div>
<div style="left:21px;top:255px;width:1px;height:89px;background:#6e6e6e;"></div>
<div style="left:42px;top:256px;width:1px;height:87px;background:#2b2b2b;"></div>
<div style="left:67px;top:256px;width:1px;height:87px;background:#2b2b2b;"></div>
<div style="left:141px;top:256px;width:1px;height:87px;background:#2b2b2b;"></div>
<div style="left:183px;top:256px;width:1px;height:87px;background:#2b2b2b;"></div>
<div style="left:233px;top:256px;width:1px;height:87px;background:#2b2b2b;"></div>
<div style="left:279px;top:256px;width:1px;height:87px;background:#2b2b2b;"></div>
<div style="left:330px;top:256px;width:1px;height:87px;background:#2b2b2b;"></div>
<div style="left:359px;top:256px;width:1px;height:87px;background:#2b2b2b;"></div>
<div style="left:431px;top:256px;width:1px;height:87px;background:#2b2b2b;"></div>
<div style="left:612px;top:256px;width:1px;height:87px;background:#2b2b2b;"></div>
<div style="left:684px;top:256px;width:1px;height:87px;background:#2b2b2b;"></div>
<div style="left:747px;top:256px;width:1px;height:17px;background:#2b2b2b;"></div>
<div style="left:747px;top:314px;width:1px;height:29px;background:#2b2b2b;"></div>
<div style="left:810px;top:256px;width:1px;height:87px;background:#2b2b2b;"></div>
<div style="left:860px;top:256px;width:1px;height:87px;background:#2b2b2b;"></div>
<div style="left:915px;top:256px;width:1px;height:87px;background:#2b2b2b;"></div>
<div style="left:977px;top:256px;width:1px;height:87px;background:#2b2b2b;"></div>
<div style="left:1034px;top:256px;width:1px;height:87px;background:#2b2b2b;"></div>
<div style="left:1077px;top:256px;width:1px;height:17px;background:#2b2b2b;"></div>
<div style="left:1077px;top:314px;width:1px;height:29px;background:#2b2b2b;"></div>
<div style="left:1141px;top:256px;width:1px;height:17px;background:#2b2b2b;"></div>
<div style="left:1141px;top:314px;width:1px;height:29px;background:#2b2b2b;"></div>
<div style="left:360px;top:274px;width:1px;height:69px;background:#555;"></div>
<span class="t mb" style="left:146.50px;top:215px;font-size:28px;line-height:36px;color:#1f3864;transform:scaleX(1.0228);">RESUMEN DIARIO DE COMPROBANTES FÍSICOS (CONTINGENCIAS)</span>
<span class="t sb" style="left:51.66px;top:257px;font-size:12px;line-height:16px;color:#ff0000;transform:scaleX(.84);transform-origin:50% 50%;">1</span>
<svg style="left:43px;top:256px" width="6" height="6" viewBox="0 0 6 6"><path d="M0 0h5.500L0 5.500z" fill="#1a7a2e"/></svg>
<span class="t sb" style="left:101.16px;top:257px;font-size:12px;line-height:16px;color:#ff0000;transform:scaleX(.84);transform-origin:50% 50%;">2</span>
<svg style="left:68px;top:256px" width="6" height="6" viewBox="0 0 6 6"><path d="M0 0h5.500L0 5.500z" fill="#1a7a2e"/></svg>
<span class="t sb" style="left:159.16px;top:257px;font-size:12px;line-height:16px;color:#ff0000;transform:scaleX(.84);transform-origin:50% 50%;">3</span>
<svg style="left:142px;top:256px" width="6" height="6" viewBox="0 0 6 6"><path d="M0 0h5.500L0 5.500z" fill="#1a7a2e"/></svg>
<span class="t sb" style="left:205.16px;top:257px;font-size:12px;line-height:16px;color:#ff0000;transform:scaleX(.84);transform-origin:50% 50%;">4</span>
<svg style="left:184px;top:256px" width="6" height="6" viewBox="0 0 6 6"><path d="M0 0h5.500L0 5.500z" fill="#1a7a2e"/></svg>
<span class="t sb" style="left:253.16px;top:257px;font-size:12px;line-height:16px;color:#ff0000;transform:scaleX(.84);transform-origin:50% 50%;">5</span>
<span class="t sb" style="left:301.66px;top:257px;font-size:12px;line-height:16px;color:#ff0000;transform:scaleX(.84);transform-origin:50% 50%;">6</span>
<svg style="left:280px;top:256px" width="6" height="6" viewBox="0 0 6 6"><path d="M0 0h5.500L0 5.500z" fill="#1a7a2e"/></svg>
<span class="t sb" style="left:341.66px;top:257px;font-size:12px;line-height:16px;color:#ff0000;transform:scaleX(.84);transform-origin:50% 50%;">7</span>
<svg style="left:331px;top:256px" width="6" height="6" viewBox="0 0 6 6"><path d="M0 0h5.500L0 5.500z" fill="#1a7a2e"/></svg>
<span class="t sb" style="left:392.16px;top:257px;font-size:12px;line-height:16px;color:#ff0000;transform:scaleX(.84);transform-origin:50% 50%;">8</span>
<svg style="left:360px;top:256px" width="6" height="6" viewBox="0 0 6 6"><path d="M0 0h5.500L0 5.500z" fill="#1a7a2e"/></svg>
<span class="t sb" style="left:518.66px;top:257px;font-size:12px;line-height:16px;color:#ff0000;transform:scaleX(.84);transform-origin:50% 50%;">9</span>
<svg style="left:432px;top:256px" width="6" height="6" viewBox="0 0 6 6"><path d="M0 0h5.500L0 5.500z" fill="#1a7a2e"/></svg>
<span class="t sb" style="left:641.83px;top:257px;font-size:12px;line-height:16px;color:#ff0000;transform:scaleX(.84);transform-origin:50% 50%;">10</span>
<svg style="left:613px;top:256px" width="6" height="6" viewBox="0 0 6 6"><path d="M0 0h5.500L0 5.500z" fill="#1a7a2e"/></svg>
<span class="t sb" style="left:709.66px;top:257px;font-size:12px;line-height:16px;color:#ff0000;transform:scaleX(.84);transform-origin:50% 50%;">11</span>
<svg style="left:685px;top:256px" width="6" height="6" viewBox="0 0 6 6"><path d="M0 0h5.500L0 5.500z" fill="#1a7a2e"/></svg>
<span class="t sb" style="left:772.33px;top:257px;font-size:12px;line-height:16px;color:#ff0000;transform:scaleX(.84);transform-origin:50% 50%;">12</span>
<svg style="left:748px;top:256px" width="6" height="6" viewBox="0 0 6 6"><path d="M0 0h5.500L0 5.500z" fill="#1a7a2e"/></svg>
<span class="t sb" style="left:828.83px;top:257px;font-size:12px;line-height:16px;color:#ff0000;transform:scaleX(.84);transform-origin:50% 50%;">13</span>
<svg style="left:811px;top:256px" width="6" height="6" viewBox="0 0 6 6"><path d="M0 0h5.500L0 5.500z" fill="#1a7a2e"/></svg>
<span class="t sb" style="left:881.33px;top:257px;font-size:12px;line-height:16px;color:#ff0000;transform:scaleX(.84);transform-origin:50% 50%;">14</span>
<svg style="left:861px;top:256px" width="6" height="6" viewBox="0 0 6 6"><path d="M0 0h5.500L0 5.500z" fill="#1a7a2e"/></svg>
<span class="t sb" style="left:939.83px;top:257px;font-size:12px;line-height:16px;color:#ff0000;transform:scaleX(.84);transform-origin:50% 50%;">15</span>
<svg style="left:916px;top:256px" width="6" height="6" viewBox="0 0 6 6"><path d="M0 0h5.500L0 5.500z" fill="#1a7a2e"/></svg>
<span class="t sb" style="left:999.33px;top:257px;font-size:12px;line-height:16px;color:#ff0000;transform:scaleX(.84);transform-origin:50% 50%;">16</span>
<svg style="left:978px;top:256px" width="6" height="6" viewBox="0 0 6 6"><path d="M0 0h5.500L0 5.500z" fill="#1a7a2e"/></svg>
<span class="t sb" style="left:1049.33px;top:257px;font-size:12px;line-height:16px;color:#ff0000;transform:scaleX(.84);transform-origin:50% 50%;">17</span>
<svg style="left:1035px;top:256px" width="6" height="6" viewBox="0 0 6 6"><path d="M0 0h5.500L0 5.500z" fill="#1a7a2e"/></svg>
<span class="t sb" style="left:1102.83px;top:257px;font-size:12px;line-height:16px;color:#ff0000;transform:scaleX(.84);transform-origin:50% 50%;">18</span>
<svg style="left:1078px;top:256px" width="6" height="6" viewBox="0 0 6 6"><path d="M0 0h5.500L0 5.500z" fill="#1a7a2e"/></svg>
<span class="t sb" style="left:1165.83px;top:257px;font-size:12px;line-height:16px;color:#ff0000;transform:scaleX(.84);transform-origin:50% 50%;">19</span>
<svg style="left:1142px;top:256px" width="6" height="6" viewBox="0 0 6 6"><path d="M0 0h5.500L0 5.500z" fill="#1a7a2e"/></svg>
<svg style="left:61px;top:274px" width="6" height="6" viewBox="0 0 6 6"><path d="M0.500 0H6v5.500z" fill="#ff0000"/></svg>
<svg style="left:135px;top:274px" width="6" height="6" viewBox="0 0 6 6"><path d="M0.500 0H6v5.500z" fill="#ff0000"/></svg>
<svg style="left:177px;top:274px" width="6" height="6" viewBox="0 0 6 6"><path d="M0.500 0H6v5.500z" fill="#ff0000"/></svg>
<svg style="left:353px;top:274px" width="6" height="6" viewBox="0 0 6 6"><path d="M0.500 0H6v5.500z" fill="#ff0000"/></svg>
<svg style="left:1197px;top:274px" width="6" height="6" viewBox="0 0 6 6"><path d="M0.500 0H6v5.500z" fill="#ff0000"/></svg>
<span class="t rb" style="left:25.50px;top:277px;font-size:11.5px;line-height:15px;color:#0d6fc2;transform:scaleX(0.7887);word-spacing:1px;-webkit-text-stroke:.2px #0d6fc2;">NÚ</span>
<span class="t rb" style="left:25.20px;top:292px;font-size:11.5px;line-height:15px;color:#0d6fc2;transform:scaleX(0.7342);word-spacing:1px;-webkit-text-stroke:.2px #0d6fc2;">ME</span>
<span class="t rb" style="left:25.80px;top:306px;font-size:11.5px;line-height:15px;color:#0d6fc2;transform:scaleX(0.7304);word-spacing:1px;-webkit-text-stroke:.2px #0d6fc2;">RO</span>
<span class="t rb" style="left:47.60px;top:286px;font-size:11.5px;line-height:15px;color:#0d6fc2;transform:scaleX(0.7980);word-spacing:1px;-webkit-text-stroke:.2px #0d6fc2;">MO</span>
<span class="t rb" style="left:48.50px;top:301px;font-size:11.5px;line-height:15px;color:#0d6fc2;transform:scaleX(0.7041);word-spacing:1px;-webkit-text-stroke:.2px #0d6fc2;">TIV</span>
<span class="t rb" style="left:52.50px;top:315px;font-size:11.5px;line-height:15px;color:#0d6fc2;transform:scaleX(0.7937);word-spacing:1px;-webkit-text-stroke:.2px #0d6fc2;">O</span>
<span class="t rb" style="left:81.70px;top:293px;font-size:11.5px;line-height:15px;color:#0d6fc2;transform:scaleX(0.7752);word-spacing:1px;-webkit-text-stroke:.2px #0d6fc2;">FECHA DE</span>
<span class="t rb" style="left:84.00px;top:308px;font-size:11.5px;line-height:15px;color:#0d6fc2;transform:scaleX(0.8079);word-spacing:1px;-webkit-text-stroke:.2px #0d6fc2;">EMISIÓN</span>
<span class="t rb" style="left:152.20px;top:293px;font-size:11.5px;line-height:15px;color:#0d6fc2;transform:scaleX(0.7683);word-spacing:1px;-webkit-text-stroke:.2px #0d6fc2;">TIPO</span>
<span class="t rb" style="left:144.50px;top:308px;font-size:11.5px;line-height:15px;color:#0d6fc2;transform:scaleX(0.8209);word-spacing:1px;-webkit-text-stroke:.2px #0d6fc2;">(TAB.10)</span>
<span class="t rb" style="left:189.90px;top:286px;font-size:11.5px;line-height:15px;color:#0d6fc2;transform:scaleX(0.7732);word-spacing:1px;-webkit-text-stroke:.2px #0d6fc2;">SERIE O</span>
<span class="t rb" style="left:196.50px;top:301px;font-size:11.5px;line-height:15px;color:#0d6fc2;transform:scaleX(0.8407);word-spacing:1px;-webkit-text-stroke:.2px #0d6fc2;">COD.</span>
<span class="t rb" style="left:198.30px;top:315px;font-size:11.5px;line-height:15px;color:#0d6fc2;transform:scaleX(0.7947);word-spacing:1px;-webkit-text-stroke:.2px #0d6fc2;">DUA</span>
<span class="t rb" style="left:235.50px;top:301px;font-size:11.5px;line-height:15px;color:#0d6fc2;transform:scaleX(0.7808);word-spacing:1px;-webkit-text-stroke:.2px #0d6fc2;">NÚMERO</span>
<span class="t rb" style="left:284.00px;top:293px;font-size:11.5px;line-height:15px;color:#0d6fc2;transform:scaleX(0.7808);word-spacing:1px;-webkit-text-stroke:.2px #0d6fc2;">NÚMERO</span>
<span class="t rb" style="left:285.00px;top:308px;font-size:11.5px;line-height:15px;color:#0d6fc2;transform:scaleX(0.7686);word-spacing:1px;-webkit-text-stroke:.2px #0d6fc2;">FINAL (2)</span>
<span class="t rb" style="left:334.80px;top:279px;font-size:11.5px;line-height:15px;color:#0d6fc2;transform:scaleX(0.7647);word-spacing:1px;-webkit-text-stroke:.2px #0d6fc2;">TIPO</span>
<span class="t rb" style="left:339.60px;top:293px;font-size:11.5px;line-height:15px;color:#0d6fc2;transform:scaleX(0.7512);word-spacing:1px;-webkit-text-stroke:.2px #0d6fc2;">DE</span>
<span class="t rb" style="left:334.20px;top:308px;font-size:11.5px;line-height:15px;color:#0d6fc2;transform:scaleX(0.7685);word-spacing:1px;-webkit-text-stroke:.2px #0d6fc2;">IDEN</span>
<span class="t rb" style="left:341.00px;top:322px;font-size:11.5px;line-height:15px;color:#0d6fc2;transform:scaleX(0.8770);word-spacing:1px;-webkit-text-stroke:.2px #0d6fc2;">T.</span>
<span class="t rb" style="left:376.60px;top:301px;font-size:11.5px;line-height:15px;color:#0d6fc2;transform:scaleX(0.7806);word-spacing:1px;-webkit-text-stroke:.2px #0d6fc2;">RUC/DNI</span>
<span class="t rb" style="left:441.80px;top:293px;font-size:11.5px;line-height:15px;color:#0d6fc2;transform:scaleX(0.7960);word-spacing:1px;-webkit-text-stroke:.2px #0d6fc2;">DENOMINACIÓN O RAZÓN SOCIAL</span>
<span class="t rb" style="left:636.80px;top:273px;font-size:11.5px;line-height:15px;color:#0d6fc2;transform:scaleX(0.8055);word-spacing:1px;-webkit-text-stroke:.2px #0d6fc2;">BASE</span>
<span class="t rb" style="left:615.30px;top:287px;font-size:11.5px;line-height:15px;color:#0d6fc2;transform:scaleX(0.7695);word-spacing:1px;-webkit-text-stroke:.2px #0d6fc2;">IMPONIBLE DE</span>
<span class="t rb" style="left:642.70px;top:301px;font-size:11.5px;line-height:15px;color:#0d6fc2;transform:scaleX(0.7512);word-spacing:1px;-webkit-text-stroke:.2px #0d6fc2;">LA</span>
<span class="t rb" style="left:620.60px;top:316px;font-size:11.5px;line-height:15px;color:#0d6fc2;transform:scaleX(0.7925);word-spacing:1px;-webkit-text-stroke:.2px #0d6fc2;">OPERACIÓN</span>
<span class="t rb" style="left:626.00px;top:330px;font-size:11.5px;line-height:15px;color:#0d6fc2;transform:scaleX(0.8135);word-spacing:1px;-webkit-text-stroke:.2px #0d6fc2;">GRAVADA</span>
<span class="t rb" style="left:694.70px;top:273px;font-size:11.5px;line-height:15px;color:#0d6fc2;transform:scaleX(0.7789);word-spacing:1px;-webkit-text-stroke:.2px #0d6fc2;">IMPORTE TOTAL DE LA</span>
<span class="t rb" style="left:689.70px;top:287px;font-size:11.5px;line-height:15px;color:#0d6fc2;transform:scaleX(0.7844);word-spacing:1px;-webkit-text-stroke:.2px #0d6fc2;">OPERACIÓN EXONERADA</span>
<span class="t rb" style="left:719.30px;top:301px;font-size:11.5px;line-height:15px;color:#0d6fc2;transform:scaleX(0.7844);word-spacing:1px;-webkit-text-stroke:.2px #0d6fc2;">O INAFECTA</span>
<span class="t rb" style="left:687.00px;top:322px;font-size:11.5px;line-height:15px;color:#0d6fc2;transform:scaleX(0.7826);word-spacing:1px;-webkit-text-stroke:.2px #0d6fc2;">EXONERADA</span>
<span class="t rb" style="left:755.20px;top:322px;font-size:11.5px;line-height:15px;color:#0d6fc2;transform:scaleX(0.7888);word-spacing:1px;-webkit-text-stroke:.2px #0d6fc2;">INAFECTA</span>
<span class="t rb" style="left:826.90px;top:301px;font-size:11.5px;line-height:15px;color:#0d6fc2;transform:scaleX(0.8709);word-spacing:1px;-webkit-text-stroke:.2px #0d6fc2;">ISC</span>
<span class="t rb" style="left:879.50px;top:301px;font-size:11.5px;line-height:15px;color:#0d6fc2;transform:scaleX(0.7595);word-spacing:1px;-webkit-text-stroke:.2px #0d6fc2;">IGV</span>
<span class="t rb" style="left:929.20px;top:293px;font-size:11.5px;line-height:15px;color:#0d6fc2;transform:scaleX(0.8470);word-spacing:1px;-webkit-text-stroke:.2px #0d6fc2;">OTROS</span>
<span class="t rb" style="left:922.60px;top:308px;font-size:11.5px;line-height:15px;color:#0d6fc2;transform:scaleX(0.8020);word-spacing:1px;-webkit-text-stroke:.2px #0d6fc2;">TRIBUTOS</span>
<span class="t rb" style="left:984.20px;top:293px;font-size:11.5px;line-height:15px;color:#0d6fc2;transform:scaleX(0.7921);word-spacing:1px;-webkit-text-stroke:.2px #0d6fc2;">IMPORTE</span>
<span class="t rb" style="left:990.50px;top:308px;font-size:11.5px;line-height:15px;color:#0d6fc2;transform:scaleX(0.7985);word-spacing:1px;-webkit-text-stroke:.2px #0d6fc2;">TOTAL</span>
<span class="t rb" style="left:1041.60px;top:273px;font-size:11.5px;line-height:15px;color:#0d6fc2;transform:scaleX(0.7822);word-spacing:1px;-webkit-text-stroke:.2px #0d6fc2;">REFERENCIA DEL COMPROBANTE</span>
<span class="t rb" style="left:1036.40px;top:287px;font-size:11.5px;line-height:15px;color:#0d6fc2;transform:scaleX(0.7902);word-spacing:1px;-webkit-text-stroke:.2px #0d6fc2;">DE PAGO O DOCUMENTO ORIGINAL</span>
<span class="t rb" style="left:1077.50px;top:301px;font-size:11.5px;line-height:15px;color:#0d6fc2;transform:scaleX(0.7773);word-spacing:1px;-webkit-text-stroke:.2px #0d6fc2;">QUE SE MODIFICA</span>
<span class="t rb" style="left:1045.20px;top:315px;font-size:11.5px;line-height:15px;color:#0d6fc2;transform:scaleX(0.7932);word-spacing:1px;-webkit-text-stroke:.2px #0d6fc2;">TIPO</span>
<span class="t rb" style="left:1037.90px;top:330px;font-size:11.5px;line-height:15px;color:#0d6fc2;transform:scaleX(0.8142);word-spacing:1px;-webkit-text-stroke:.2px #0d6fc2;">(TAB.10)</span>
<span class="t rb" style="left:1097.00px;top:322px;font-size:11.5px;line-height:15px;color:#0d6fc2;transform:scaleX(0.7504);word-spacing:1px;-webkit-text-stroke:.2px #0d6fc2;">SERIE</span>
<span class="t rb" style="left:1152.10px;top:322px;font-size:11.5px;line-height:15px;color:#0d6fc2;transform:scaleX(0.7884);word-spacing:1px;-webkit-text-stroke:.2px #0d6fc2;">NUMERO</span>
<span class="t s" style="left:22.90px;top:347px;font-size:10.4px;line-height:14px;color:#000;transform:scaleX(0.9500);-webkit-text-stroke:.2px #000;">1</span>
<span class="t s" style="left:44.70px;top:347px;font-size:10.4px;line-height:14px;color:#000;transform:scaleX(0.9500);-webkit-text-stroke:.2px #000;">1</span>
<svg style="left:43px;top:344px" width="6" height="6" viewBox="0 0 6 6"><path d="M0 0h5.500L0 5.500z" fill="#1a7a2e"/></svg>
<span class="t s" style="left:69.70px;top:347px;font-size:10.4px;line-height:14px;color:#000;transform:scaleX(1.0240);-webkit-text-stroke:.2px #000;">01/12/2017</span>
<span class="t s" style="left:143.70px;top:347px;font-size:10.4px;line-height:14px;color:#000;transform:scaleX(0.9500);-webkit-text-stroke:.2px #000;">01</span>
<svg style="left:142px;top:344px" width="6" height="6" viewBox="0 0 6 6"><path d="M0 0h5.500L0 5.500z" fill="#1a7a2e"/></svg>
<span class="t s" style="left:185.70px;top:347px;font-size:10.4px;line-height:14px;color:#000;transform:scaleX(0.9500);-webkit-text-stroke:.2px #000;">0001</span>
<svg style="left:184px;top:344px" width="6" height="6" viewBox="0 0 6 6"><path d="M0 0h5.500L0 5.500z" fill="#1a7a2e"/></svg>
<span class="t s" style="left:235.70px;top:347px;font-size:10.4px;line-height:14px;color:#000;transform:scaleX(0.9500);-webkit-text-stroke:.2px #000;">1</span>
<span class="t s" style="left:332.70px;top:347px;font-size:10.4px;line-height:14px;color:#000;transform:scaleX(0.9500);-webkit-text-stroke:.2px #000;">6</span>
<span class="t s" style="left:361.70px;top:347px;font-size:10.4px;line-height:14px;color:#000;transform:scaleX(0.9500);-webkit-text-stroke:.2px #000;">20102420706</span>
<svg style="left:360px;top:344px" width="6" height="6" viewBox="0 0 6 6"><path d="M0 0h5.500L0 5.500z" fill="#1a7a2e"/></svg>
<span class="t s" style="left:433.40px;top:347px;font-size:10.4px;line-height:14px;color:#000;transform:scaleX(0.9930);-webkit-text-stroke:.2px #000;">Comercial Fatmagul SAC</span>
<span class="t s" style="left:614.70px;top:347px;font-size:10.4px;line-height:14px;color:#000;transform:scaleX(0.9500);-webkit-text-stroke:.2px #000;">0.00</span>
<svg style="left:613px;top:344px" width="6" height="6" viewBox="0 0 6 6"><path d="M0 0h5.500L0 5.500z" fill="#1a7a2e"/></svg>
<span class="t s" style="left:686.70px;top:347px;font-size:10.4px;line-height:14px;color:#000;transform:scaleX(0.9500);-webkit-text-stroke:.2px #000;">0.00</span>
<svg style="left:685px;top:344px" width="6" height="6" viewBox="0 0 6 6"><path d="M0 0h5.500L0 5.500z" fill="#1a7a2e"/></svg>
<span class="t s" style="left:749.70px;top:347px;font-size:10.4px;line-height:14px;color:#000;transform:scaleX(0.9500);-webkit-text-stroke:.2px #000;">0.00</span>
<svg style="left:748px;top:344px" width="6" height="6" viewBox="0 0 6 6"><path d="M0 0h5.500L0 5.500z" fill="#1a7a2e"/></svg>
<span class="t s" style="left:812.70px;top:347px;font-size:10.4px;line-height:14px;color:#000;transform:scaleX(0.9500);-webkit-text-stroke:.2px #000;">0.00</span>
<svg style="left:811px;top:344px" width="6" height="6" viewBox="0 0 6 6"><path d="M0 0h5.500L0 5.500z" fill="#1a7a2e"/></svg>
<span class="t s" style="left:862.70px;top:347px;font-size:10.4px;line-height:14px;color:#000;transform:scaleX(0.9500);-webkit-text-stroke:.2px #000;">369.15</span>
<svg style="left:861px;top:344px" width="6" height="6" viewBox="0 0 6 6"><path d="M0 0h5.500L0 5.500z" fill="#1a7a2e"/></svg>
<span class="t s" style="left:917.70px;top:347px;font-size:10.4px;line-height:14px;color:#000;transform:scaleX(0.9500);-webkit-text-stroke:.2px #000;">0.00</span>
<svg style="left:916px;top:344px" width="6" height="6" viewBox="0 0 6 6"><path d="M0 0h5.500L0 5.500z" fill="#1a7a2e"/></svg>
<span class="t s" style="left:979.70px;top:347px;font-size:10.4px;line-height:14px;color:#000;transform:scaleX(0.9500);-webkit-text-stroke:.2px #000;">2420.00</span>
<svg style="left:978px;top:344px" width="6" height="6" viewBox="0 0 6 6"><path d="M0 0h5.500L0 5.500z" fill="#1a7a2e"/></svg>
<span class="t s" style="left:22.90px;top:365px;font-size:10.4px;line-height:14px;color:#000;transform:scaleX(0.9500);-webkit-text-stroke:.2px #000;">2</span>
<span class="t s" style="left:44.70px;top:365px;font-size:10.4px;line-height:14px;color:#000;transform:scaleX(0.9500);-webkit-text-stroke:.2px #000;">1</span>
<svg style="left:43px;top:362px" width="6" height="6" viewBox="0 0 6 6"><path d="M0 0h5.500L0 5.500z" fill="#1a7a2e"/></svg>
<span class="t s" style="left:69.70px;top:365px;font-size:10.4px;line-height:14px;color:#000;transform:scaleX(1.0240);-webkit-text-stroke:.2px #000;">01/12/2017</span>
<span class="t s" style="left:143.70px;top:365px;font-size:10.4px;line-height:14px;color:#000;transform:scaleX(0.9500);-webkit-text-stroke:.2px #000;">03</span>
<svg style="left:142px;top:362px" width="6" height="6" viewBox="0 0 6 6"><path d="M0 0h5.500L0 5.500z" fill="#1a7a2e"/></svg>
<span class="t s" style="left:185.70px;top:365px;font-size:10.4px;line-height:14px;color:#000;transform:scaleX(0.9500);-webkit-text-stroke:.2px #000;">0001</span>
<svg style="left:184px;top:362px" width="6" height="6" viewBox="0 0 6 6"><path d="M0 0h5.500L0 5.500z" fill="#1a7a2e"/></svg>
<span class="t s" style="left:235.70px;top:365px;font-size:10.4px;line-height:14px;color:#000;transform:scaleX(0.9500);-webkit-text-stroke:.2px #000;">3</span>
<span class="t s" style="left:332.70px;top:365px;font-size:10.4px;line-height:14px;color:#000;transform:scaleX(0.9500);-webkit-text-stroke:.2px #000;">1</span>
<span class="t s" style="left:361.70px;top:365px;font-size:10.4px;line-height:14px;color:#000;transform:scaleX(0.9500);-webkit-text-stroke:.2px #000;">46237541</span>
<svg style="left:360px;top:362px" width="6" height="6" viewBox="0 0 6 6"><path d="M0 0h5.500L0 5.500z" fill="#1a7a2e"/></svg>
<span class="t s" style="left:433.40px;top:365px;font-size:10.4px;line-height:14px;color:#000;transform:scaleX(0.9873);-webkit-text-stroke:.2px #000;">Pazos Atoche Luana</span>
<span class="t s" style="left:614.70px;top:365px;font-size:10.4px;line-height:14px;color:#000;transform:scaleX(0.9500);-webkit-text-stroke:.2px #000;">1101.69</span>
<svg style="left:613px;top:362px" width="6" height="6" viewBox="0 0 6 6"><path d="M0 0h5.500L0 5.500z" fill="#1a7a2e"/></svg>
<span class="t s" style="left:686.70px;top:365px;font-size:10.4px;line-height:14px;color:#000;transform:scaleX(0.9500);-webkit-text-stroke:.2px #000;">0.00</span>
<svg style="left:685px;top:362px" width="6" height="6" viewBox="0 0 6 6"><path d="M0 0h5.500L0 5.500z" fill="#1a7a2e"/></svg>
<span class="t s" style="left:749.70px;top:365px;font-size:10.4px;line-height:14px;color:#000;transform:scaleX(0.9500);-webkit-text-stroke:.2px #000;">0.00</span>
<svg style="left:748px;top:362px" width="6" height="6" viewBox="0 0 6 6"><path d="M0 0h5.500L0 5.500z" fill="#1a7a2e"/></svg>
<span class="t s" style="left:812.70px;top:365px;font-size:10.4px;line-height:14px;color:#000;transform:scaleX(0.9500);-webkit-text-stroke:.2px #000;">0.00</span>
<svg style="left:811px;top:362px" width="6" height="6" viewBox="0 0 6 6"><path d="M0 0h5.500L0 5.500z" fill="#1a7a2e"/></svg>
<span class="t s" style="left:862.70px;top:365px;font-size:10.4px;line-height:14px;color:#000;transform:scaleX(0.9500);-webkit-text-stroke:.2px #000;">198.31</span>
<svg style="left:861px;top:362px" width="6" height="6" viewBox="0 0 6 6"><path d="M0 0h5.500L0 5.500z" fill="#1a7a2e"/></svg>
<span class="t s" style="left:917.70px;top:365px;font-size:10.4px;line-height:14px;color:#000;transform:scaleX(0.9500);-webkit-text-stroke:.2px #000;">0.00</span>
<svg style="left:916px;top:362px" width="6" height="6" viewBox="0 0 6 6"><path d="M0 0h5.500L0 5.500z" fill="#1a7a2e"/></svg>
<span class="t s" style="left:979.70px;top:365px;font-size:10.4px;line-height:14px;color:#000;transform:scaleX(0.9500);-webkit-text-stroke:.2px #000;">1300.00</span>
<svg style="left:978px;top:362px" width="6" height="6" viewBox="0 0 6 6"><path d="M0 0h5.500L0 5.500z" fill="#1a7a2e"/></svg>
<span class="t s" style="left:22.90px;top:383px;font-size:10.4px;line-height:14px;color:#000;transform:scaleX(0.9500);-webkit-text-stroke:.2px #000;">3</span>
<span class="t s" style="left:44.70px;top:383px;font-size:10.4px;line-height:14px;color:#000;transform:scaleX(0.9500);-webkit-text-stroke:.2px #000;">1</span>
<svg style="left:43px;top:380px" width="6" height="6" viewBox="0 0 6 6"><path d="M0 0h5.500L0 5.500z" fill="#1a7a2e"/></svg>
<span class="t s" style="left:69.70px;top:383px;font-size:10.4px;line-height:14px;color:#000;transform:scaleX(1.0240);-webkit-text-stroke:.2px #000;">01/12/2017</span>
<span class="t s" style="left:143.70px;top:383px;font-size:10.4px;line-height:14px;color:#000;transform:scaleX(0.9500);-webkit-text-stroke:.2px #000;">07</span>
<svg style="left:142px;top:380px" width="6" height="6" viewBox="0 0 6 6"><path d="M0 0h5.500L0 5.500z" fill="#1a7a2e"/></svg>
<span class="t s" style="left:185.70px;top:383px;font-size:10.4px;line-height:14px;color:#000;transform:scaleX(0.9500);-webkit-text-stroke:.2px #000;">0001</span>
<svg style="left:184px;top:380px" width="6" height="6" viewBox="0 0 6 6"><path d="M0 0h5.500L0 5.500z" fill="#1a7a2e"/></svg>
<span class="t s" style="left:235.70px;top:383px;font-size:10.4px;line-height:14px;color:#000;transform:scaleX(0.9500);-webkit-text-stroke:.2px #000;">7</span>
<span class="t s" style="left:332.70px;top:383px;font-size:10.4px;line-height:14px;color:#000;transform:scaleX(0.9500);-webkit-text-stroke:.2px #000;">6</span>
<span class="t s" style="left:361.70px;top:383px;font-size:10.4px;line-height:14px;color:#000;transform:scaleX(0.9500);-webkit-text-stroke:.2px #000;">20102420706</span>
<svg style="left:360px;top:380px" width="6" height="6" viewBox="0 0 6 6"><path d="M0 0h5.500L0 5.500z" fill="#1a7a2e"/></svg>
<span class="t s" style="left:433.40px;top:383px;font-size:10.4px;line-height:14px;color:#000;transform:scaleX(0.9930);-webkit-text-stroke:.2px #000;">Comercial Fatmagul SAC</span>
<span class="t s" style="left:614.70px;top:383px;font-size:10.4px;line-height:14px;color:#000;transform:scaleX(0.9500);-webkit-text-stroke:.2px #000;">398.31</span>
<svg style="left:613px;top:380px" width="6" height="6" viewBox="0 0 6 6"><path d="M0 0h5.500L0 5.500z" fill="#1a7a2e"/></svg>
<span class="t s" style="left:686.70px;top:383px;font-size:10.4px;line-height:14px;color:#000;transform:scaleX(0.9500);-webkit-text-stroke:.2px #000;">0.00</span>
<svg style="left:685px;top:380px" width="6" height="6" viewBox="0 0 6 6"><path d="M0 0h5.500L0 5.500z" fill="#1a7a2e"/></svg>
<span class="t s" style="left:749.70px;top:383px;font-size:10.4px;line-height:14px;color:#000;transform:scaleX(0.9500);-webkit-text-stroke:.2px #000;">0.00</span>
<svg style="left:748px;top:380px" width="6" height="6" viewBox="0 0 6 6"><path d="M0 0h5.500L0 5.500z" fill="#1a7a2e"/></svg>
<span class="t s" style="left:812.70px;top:383px;font-size:10.4px;line-height:14px;color:#000;transform:scaleX(0.9500);-webkit-text-stroke:.2px #000;">0.00</span>
<svg style="left:811px;top:380px" width="6" height="6" viewBox="0 0 6 6"><path d="M0 0h5.500L0 5.500z" fill="#1a7a2e"/></svg>
<span class="t s" style="left:862.70px;top:383px;font-size:10.4px;line-height:14px;color:#000;transform:scaleX(0.9500);-webkit-text-stroke:.2px #000;">71.69</span>
<svg style="left:861px;top:380px" width="6" height="6" viewBox="0 0 6 6"><path d="M0 0h5.500L0 5.500z" fill="#1a7a2e"/></svg>
<span class="t s" style="left:917.70px;top:383px;font-size:10.4px;line-height:14px;color:#000;transform:scaleX(0.9500);-webkit-text-stroke:.2px #000;">0.00</span>
<svg style="left:916px;top:380px" width="6" height="6" viewBox="0 0 6 6"><path d="M0 0h5.500L0 5.500z" fill="#1a7a2e"/></svg>
<span class="t s" style="left:979.70px;top:383px;font-size:10.4px;line-height:14px;color:#000;transform:scaleX(0.9500);-webkit-text-stroke:.2px #000;">470.00</span>
<svg style="left:978px;top:380px" width="6" height="6" viewBox="0 0 6 6"><path d="M0 0h5.500L0 5.500z" fill="#1a7a2e"/></svg>
<span class="t s" style="left:1036.70px;top:383px;font-size:10.4px;line-height:14px;color:#000;transform:scaleX(0.9500);-webkit-text-stroke:.2px #000;">01</span>
<svg style="left:1035px;top:380px" width="6" height="6" viewBox="0 0 6 6"><path d="M0 0h5.500L0 5.500z" fill="#1a7a2e"/></svg>
<span class="t s" style="left:1079.70px;top:383px;font-size:10.4px;line-height:14px;color:#000;transform:scaleX(0.9500);-webkit-text-stroke:.2px #000;">0001</span>
<svg style="left:1078px;top:380px" width="6" height="6" viewBox="0 0 6 6"><path d="M0 0h5.500L0 5.500z" fill="#1a7a2e"/></svg>
<span class="t s" style="left:1143.70px;top:383px;font-size:10.4px;line-height:14px;color:#000;transform:scaleX(0.9500);-webkit-text-stroke:.2px #000;">1</span>
<span class="t s" style="left:22.90px;top:401px;font-size:10.4px;line-height:14px;color:#000;transform:scaleX(0.9500);-webkit-text-stroke:.2px #000;">4</span>
<span class="t s" style="left:44.70px;top:401px;font-size:10.4px;line-height:14px;color:#000;transform:scaleX(0.9500);-webkit-text-stroke:.2px #000;">1</span>
<svg style="left:43px;top:398px" width="6" height="6" viewBox="0 0 6 6"><path d="M0 0h5.500L0 5.500z" fill="#1a7a2e"/></svg>
<span class="t s" style="left:69.70px;top:401px;font-size:10.4px;line-height:14px;color:#000;transform:scaleX(1.0240);-webkit-text-stroke:.2px #000;">01/12/2017</span>
<span class="t s" style="left:143.70px;top:401px;font-size:10.4px;line-height:14px;color:#000;transform:scaleX(0.9500);-webkit-text-stroke:.2px #000;">08</span>
<svg style="left:142px;top:398px" width="6" height="6" viewBox="0 0 6 6"><path d="M0 0h5.500L0 5.500z" fill="#1a7a2e"/></svg>
<span class="t s" style="left:185.70px;top:401px;font-size:10.4px;line-height:14px;color:#000;transform:scaleX(0.9500);-webkit-text-stroke:.2px #000;">0001</span>
<svg style="left:184px;top:398px" width="6" height="6" viewBox="0 0 6 6"><path d="M0 0h5.500L0 5.500z" fill="#1a7a2e"/></svg>
<span class="t s" style="left:235.70px;top:401px;font-size:10.4px;line-height:14px;color:#000;transform:scaleX(0.9500);-webkit-text-stroke:.2px #000;">2</span>
<span class="t s" style="left:332.70px;top:401px;font-size:10.4px;line-height:14px;color:#000;transform:scaleX(0.9500);-webkit-text-stroke:.2px #000;">6</span>
<span class="t s" style="left:361.70px;top:401px;font-size:10.4px;line-height:14px;color:#000;transform:scaleX(0.9500);-webkit-text-stroke:.2px #000;">20102420706</span>
<svg style="left:360px;top:398px" width="6" height="6" viewBox="0 0 6 6"><path d="M0 0h5.500L0 5.500z" fill="#1a7a2e"/></svg>
<span class="t s" style="left:433.40px;top:401px;font-size:10.4px;line-height:14px;color:#000;transform:scaleX(0.9930);-webkit-text-stroke:.2px #000;">Comercial Fatmagul SAC</span>
<span class="t s" style="left:614.70px;top:401px;font-size:10.4px;line-height:14px;color:#000;transform:scaleX(0.9500);-webkit-text-stroke:.2px #000;">0.00</span>
<svg style="left:613px;top:398px" width="6" height="6" viewBox="0 0 6 6"><path d="M0 0h5.500L0 5.500z" fill="#1a7a2e"/></svg>
<span class="t s" style="left:686.70px;top:401px;font-size:10.4px;line-height:14px;color:#000;transform:scaleX(0.9500);-webkit-text-stroke:.2px #000;">0.00</span>
<svg style="left:685px;top:398px" width="6" height="6" viewBox="0 0 6 6"><path d="M0 0h5.500L0 5.500z" fill="#1a7a2e"/></svg>
<span class="t s" style="left:749.70px;top:401px;font-size:10.4px;line-height:14px;color:#000;transform:scaleX(0.9500);-webkit-text-stroke:.2px #000;">785.00</span>
<svg style="left:748px;top:398px" width="6" height="6" viewBox="0 0 6 6"><path d="M0 0h5.500L0 5.500z" fill="#1a7a2e"/></svg>
<span class="t s" style="left:812.70px;top:401px;font-size:10.4px;line-height:14px;color:#000;transform:scaleX(0.9500);-webkit-text-stroke:.2px #000;">0.00</span>
<svg style="left:811px;top:398px" width="6" height="6" viewBox="0 0 6 6"><path d="M0 0h5.500L0 5.500z" fill="#1a7a2e"/></svg>
<span class="t s" style="left:862.70px;top:401px;font-size:10.4px;line-height:14px;color:#000;transform:scaleX(0.9500);-webkit-text-stroke:.2px #000;">0.00</span>
<svg style="left:861px;top:398px" width="6" height="6" viewBox="0 0 6 6"><path d="M0 0h5.500L0 5.500z" fill="#1a7a2e"/></svg>
<span class="t s" style="left:917.70px;top:401px;font-size:10.4px;line-height:14px;color:#000;transform:scaleX(0.9500);-webkit-text-stroke:.2px #000;">0.00</span>
<svg style="left:916px;top:398px" width="6" height="6" viewBox="0 0 6 6"><path d="M0 0h5.500L0 5.500z" fill="#1a7a2e"/></svg>
<span class="t s" style="left:979.70px;top:401px;font-size:10.4px;line-height:14px;color:#000;transform:scaleX(0.9500);-webkit-text-stroke:.2px #000;">785.00</span>
<svg style="left:978px;top:398px" width="6" height="6" viewBox="0 0 6 6"><path d="M0 0h5.500L0 5.500z" fill="#1a7a2e"/></svg>
<span class="t s" style="left:1036.70px;top:401px;font-size:10.4px;line-height:14px;color:#000;transform:scaleX(0.9500);-webkit-text-stroke:.2px #000;">01</span>
<svg style="left:1035px;top:398px" width="6" height="6" viewBox="0 0 6 6"><path d="M0 0h5.500L0 5.500z" fill="#1a7a2e"/></svg>
<span class="t s" style="left:1079.70px;top:401px;font-size:10.4px;line-height:14px;color:#000;transform:scaleX(0.9500);-webkit-text-stroke:.2px #000;">0001</span>
<svg style="left:1078px;top:398px" width="6" height="6" viewBox="0 0 6 6"><path d="M0 0h5.500L0 5.500z" fill="#1a7a2e"/></svg>
<span class="t s" style="left:1143.70px;top:401px;font-size:10.4px;line-height:14px;color:#000;transform:scaleX(0.9500);-webkit-text-stroke:.2px #000;">1</span>
<span class="t s" style="left:22.90px;top:419px;font-size:10.4px;line-height:14px;color:#000;transform:scaleX(0.9500);-webkit-text-stroke:.2px #000;">5</span>
<span class="t s" style="left:44.70px;top:419px;font-size:10.4px;line-height:14px;color:#000;transform:scaleX(0.9500);-webkit-text-stroke:.2px #000;">1</span>
<svg style="left:43px;top:416px" width="6" height="6" viewBox="0 0 6 6"><path d="M0 0h5.500L0 5.500z" fill="#1a7a2e"/></svg>
<span class="t s" style="left:69.70px;top:419px;font-size:10.4px;line-height:14px;color:#000;transform:scaleX(1.0240);-webkit-text-stroke:.2px #000;">01/12/2017</span>
<span class="t s" style="left:143.70px;top:419px;font-size:10.4px;line-height:14px;color:#000;transform:scaleX(0.9500);-webkit-text-stroke:.2px #000;">12</span>
<svg style="left:142px;top:416px" width="6" height="6" viewBox="0 0 6 6"><path d="M0 0h5.500L0 5.500z" fill="#1a7a2e"/></svg>
<span class="t s" style="left:185.70px;top:419px;font-size:10.4px;line-height:14px;color:#000;transform:scaleX(0.9100);-webkit-text-stroke:.2px #000;">TKF01</span>
<span class="t s" style="left:235.70px;top:419px;font-size:10.4px;line-height:14px;color:#000;transform:scaleX(0.9500);-webkit-text-stroke:.2px #000;">5411077</span>
<span class="t s" style="left:332.70px;top:419px;font-size:10.4px;line-height:14px;color:#000;transform:scaleX(0.9500);-webkit-text-stroke:.2px #000;">6</span>
<span class="t s" style="left:361.70px;top:419px;font-size:10.4px;line-height:14px;color:#000;transform:scaleX(0.9500);-webkit-text-stroke:.2px #000;">20102420706</span>
<svg style="left:360px;top:416px" width="6" height="6" viewBox="0 0 6 6"><path d="M0 0h5.500L0 5.500z" fill="#1a7a2e"/></svg>
<span class="t s" style="left:433.40px;top:419px;font-size:10.4px;line-height:14px;color:#000;transform:scaleX(0.9930);-webkit-text-stroke:.2px #000;">Comercial Fatmagul SAC</span>
<span class="t s" style="left:614.70px;top:419px;font-size:10.4px;line-height:14px;color:#000;transform:scaleX(0.9500);-webkit-text-stroke:.2px #000;">3023.73</span>
<svg style="left:613px;top:416px" width="6" height="6" viewBox="0 0 6 6"><path d="M0 0h5.500L0 5.500z" fill="#1a7a2e"/></svg>
<span class="t s" style="left:686.70px;top:419px;font-size:10.4px;line-height:14px;color:#000;transform:scaleX(0.9500);-webkit-text-stroke:.2px #000;">0.00</span>
<svg style="left:685px;top:416px" width="6" height="6" viewBox="0 0 6 6"><path d="M0 0h5.500L0 5.500z" fill="#1a7a2e"/></svg>
<span class="t s" style="left:749.70px;top:419px;font-size:10.4px;line-height:14px;color:#000;transform:scaleX(0.9500);-webkit-text-stroke:.2px #000;">0.00</span>
<svg style="left:748px;top:416px" width="6" height="6" viewBox="0 0 6 6"><path d="M0 0h5.500L0 5.500z" fill="#1a7a2e"/></svg>
<span class="t s" style="left:812.70px;top:419px;font-size:10.4px;line-height:14px;color:#000;transform:scaleX(0.9500);-webkit-text-stroke:.2px #000;">0.00</span>
<svg style="left:811px;top:416px" width="6" height="6" viewBox="0 0 6 6"><path d="M0 0h5.500L0 5.500z" fill="#1a7a2e"/></svg>
<span class="t s" style="left:862.70px;top:419px;font-size:10.4px;line-height:14px;color:#000;transform:scaleX(0.9500);-webkit-text-stroke:.2px #000;">544.27</span>
<svg style="left:861px;top:416px" width="6" height="6" viewBox="0 0 6 6"><path d="M0 0h5.500L0 5.500z" fill="#1a7a2e"/></svg>
<span class="t s" style="left:917.70px;top:419px;font-size:10.4px;line-height:14px;color:#000;transform:scaleX(0.9500);-webkit-text-stroke:.2px #000;">0.00</span>
<svg style="left:916px;top:416px" width="6" height="6" viewBox="0 0 6 6"><path d="M0 0h5.500L0 5.500z" fill="#1a7a2e"/></svg>
<span class="t s" style="left:979.70px;top:419px;font-size:10.4px;line-height:14px;color:#000;transform:scaleX(0.9500);-webkit-text-stroke:.2px #000;">3568.00</span>
<svg style="left:978px;top:416px" width="6" height="6" viewBox="0 0 6 6"><path d="M0 0h5.500L0 5.500z" fill="#1a7a2e"/></svg>
<span class="t s" style="left:22.90px;top:437px;font-size:10.4px;line-height:14px;color:#000;transform:scaleX(0.9500);-webkit-text-stroke:.2px #000;">6</span>
<span class="t s" style="left:44.70px;top:437px;font-size:10.4px;line-height:14px;color:#000;transform:scaleX(0.9500);-webkit-text-stroke:.2px #000;">1</span>
<svg style="left:43px;top:434px" width="6" height="6" viewBox="0 0 6 6"><path d="M0 0h5.500L0 5.500z" fill="#1a7a2e"/></svg>
<span class="t s" style="left:69.70px;top:437px;font-size:10.4px;line-height:14px;color:#000;transform:scaleX(1.0240);-webkit-text-stroke:.2px #000;">01/12/2017</span>
<span class="t s" style="left:143.70px;top:437px;font-size:10.4px;line-height:14px;color:#000;transform:scaleX(0.9500);-webkit-text-stroke:.2px #000;">12</span>
<svg style="left:142px;top:434px" width="6" height="6" viewBox="0 0 6 6"><path d="M0 0h5.500L0 5.500z" fill="#1a7a2e"/></svg>
<span class="t s" style="left:185.70px;top:437px;font-size:10.4px;line-height:14px;color:#000;transform:scaleX(0.8932);-webkit-text-stroke:.2px #000;">TKB01</span>
<span class="t s" style="left:235.70px;top:437px;font-size:10.4px;line-height:14px;color:#000;transform:scaleX(0.9500);-webkit-text-stroke:.2px #000;">426589</span>
<span class="t s" style="left:281.70px;top:437px;font-size:10.4px;line-height:14px;color:#000;transform:scaleX(0.9500);-webkit-text-stroke:.2px #000;">428451</span>
<span class="t s" style="left:332.70px;top:437px;font-size:10.4px;line-height:14px;color:#000;transform:scaleX(0.9500);-webkit-text-stroke:.2px #000;">0</span>
<span class="t s" style="left:361.70px;top:437px;font-size:10.4px;line-height:14px;color:#000;transform:scaleX(0.9500);-webkit-text-stroke:.2px #000;">0</span>
<svg style="left:360px;top:434px" width="6" height="6" viewBox="0 0 6 6"><path d="M0 0h5.500L0 5.500z" fill="#1a7a2e"/></svg>
<span class="t s" style="left:433.40px;top:437px;font-size:10.4px;line-height:14px;color:#000;transform:scaleX(1.0377);-webkit-text-stroke:.2px #000;">Consolidado</span>
<span class="t s" style="left:614.70px;top:437px;font-size:10.4px;line-height:14px;color:#000;transform:scaleX(0.9500);-webkit-text-stroke:.2px #000;">4745.76</span>
<svg style="left:613px;top:434px" width="6" height="6" viewBox="0 0 6 6"><path d="M0 0h5.500L0 5.500z" fill="#1a7a2e"/></svg>
<span class="t s" style="left:686.70px;top:437px;font-size:10.4px;line-height:14px;color:#000;transform:scaleX(0.9500);-webkit-text-stroke:.2px #000;">256.00</span>
<svg style="left:685px;top:434px" width="6" height="6" viewBox="0 0 6 6"><path d="M0 0h5.500L0 5.500z" fill="#1a7a2e"/></svg>
<span class="t s" style="left:749.70px;top:437px;font-size:10.4px;line-height:14px;color:#000;transform:scaleX(0.9500);-webkit-text-stroke:.2px #000;">0.00</span>
<svg style="left:748px;top:434px" width="6" height="6" viewBox="0 0 6 6"><path d="M0 0h5.500L0 5.500z" fill="#1a7a2e"/></svg>
<span class="t s" style="left:812.70px;top:437px;font-size:10.4px;line-height:14px;color:#000;transform:scaleX(0.9500);-webkit-text-stroke:.2px #000;">0.00</span>
<svg style="left:811px;top:434px" width="6" height="6" viewBox="0 0 6 6"><path d="M0 0h5.500L0 5.500z" fill="#1a7a2e"/></svg>
<span class="t s" style="left:862.70px;top:437px;font-size:10.4px;line-height:14px;color:#000;transform:scaleX(0.9500);-webkit-text-stroke:.2px #000;">821.24</span>
<svg style="left:861px;top:434px" width="6" height="6" viewBox="0 0 6 6"><path d="M0 0h5.500L0 5.500z" fill="#1a7a2e"/></svg>
<span class="t s" style="left:917.70px;top:437px;font-size:10.4px;line-height:14px;color:#000;transform:scaleX(0.9500);-webkit-text-stroke:.2px #000;">0.00</span>
<svg style="left:916px;top:434px" width="6" height="6" viewBox="0 0 6 6"><path d="M0 0h5.500L0 5.500z" fill="#1a7a2e"/></svg>
<span class="t s" style="left:979.70px;top:437px;font-size:10.4px;line-height:14px;color:#000;transform:scaleX(0.9500);-webkit-text-stroke:.2px #000;">5823.00</span>
<svg style="left:978px;top:434px" width="6" height="6" viewBox="0 0 6 6"><path d="M0 0h5.500L0 5.500z" fill="#1a7a2e"/></svg>
<span class="t s" style="left:22.90px;top:455px;font-size:10.4px;line-height:14px;color:#000;transform:scaleX(0.9500);-webkit-text-stroke:.2px #000;">7</span>
<span class="t s" style="left:44.70px;top:455px;font-size:10.4px;line-height:14px;color:#000;transform:scaleX(0.9500);-webkit-text-stroke:.2px #000;">1</span>
<svg style="left:43px;top:452px" width="6" height="6" viewBox="0 0 6 6"><path d="M0 0h5.500L0 5.500z" fill="#1a7a2e"/></svg>
<span class="t s" style="left:69.70px;top:455px;font-size:10.4px;line-height:14px;color:#000;transform:scaleX(1.0240);-webkit-text-stroke:.2px #000;">01/12/2017</span>
<span class="t s" style="left:143.70px;top:455px;font-size:10.4px;line-height:14px;color:#000;transform:scaleX(0.9500);-webkit-text-stroke:.2px #000;">01</span>
<svg style="left:142px;top:452px" width="6" height="6" viewBox="0 0 6 6"><path d="M0 0h5.500L0 5.500z" fill="#1a7a2e"/></svg>
<span class="t s" style="left:185.70px;top:455px;font-size:10.4px;line-height:14px;color:#000;transform:scaleX(0.9500);-webkit-text-stroke:.2px #000;">0001</span>
<svg style="left:184px;top:452px" width="6" height="6" viewBox="0 0 6 6"><path d="M0 0h5.500L0 5.500z" fill="#1a7a2e"/></svg>
<span class="t s" style="left:235.70px;top:455px;font-size:10.4px;line-height:14px;color:#000;transform:scaleX(0.9500);-webkit-text-stroke:.2px #000;">2</span>
<span class="t s" style="left:332.70px;top:455px;font-size:10.4px;line-height:14px;color:#000;transform:scaleX(0.9500);-webkit-text-stroke:.2px #000;">6</span>
<span class="t s" style="left:361.70px;top:455px;font-size:10.4px;line-height:14px;color:#000;transform:scaleX(0.9500);-webkit-text-stroke:.2px #000;">20102420706</span>
<svg style="left:360px;top:452px" width="6" height="6" viewBox="0 0 6 6"><path d="M0 0h5.500L0 5.500z" fill="#1a7a2e"/></svg>
<span class="t s" style="left:433.40px;top:455px;font-size:10.4px;line-height:14px;color:#000;transform:scaleX(0.9930);-webkit-text-stroke:.2px #000;">Comercial Fatmagul SAC</span>
<span class="t s" style="left:614.70px;top:455px;font-size:10.4px;line-height:14px;color:#000;transform:scaleX(0.9500);-webkit-text-stroke:.2px #000;">1009.66</span>
<svg style="left:613px;top:452px" width="6" height="6" viewBox="0 0 6 6"><path d="M0 0h5.500L0 5.500z" fill="#1a7a2e"/></svg>
<span class="t s" style="left:686.70px;top:455px;font-size:10.4px;line-height:14px;color:#000;transform:scaleX(0.9500);-webkit-text-stroke:.2px #000;">0.00</span>
<svg style="left:685px;top:452px" width="6" height="6" viewBox="0 0 6 6"><path d="M0 0h5.500L0 5.500z" fill="#1a7a2e"/></svg>
<span class="t s" style="left:749.70px;top:455px;font-size:10.4px;line-height:14px;color:#000;transform:scaleX(0.9500);-webkit-text-stroke:.2px #000;">0.00</span>
<svg style="left:748px;top:452px" width="6" height="6" viewBox="0 0 6 6"><path d="M0 0h5.500L0 5.500z" fill="#1a7a2e"/></svg>
<span class="t s" style="left:812.70px;top:455px;font-size:10.4px;line-height:14px;color:#000;transform:scaleX(0.9500);-webkit-text-stroke:.2px #000;">0.00</span>
<svg style="left:811px;top:452px" width="6" height="6" viewBox="0 0 6 6"><path d="M0 0h5.500L0 5.500z" fill="#1a7a2e"/></svg>
<span class="t s" style="left:862.70px;top:455px;font-size:10.4px;line-height:14px;color:#000;transform:scaleX(0.9500);-webkit-text-stroke:.2px #000;">181.74</span>
<svg style="left:861px;top:452px" width="6" height="6" viewBox="0 0 6 6"><path d="M0 0h5.500L0 5.500z" fill="#1a7a2e"/></svg>
<span class="t s" style="left:917.70px;top:455px;font-size:10.4px;line-height:14px;color:#000;transform:scaleX(0.9500);-webkit-text-stroke:.2px #000;">0.00</span>
<svg style="left:916px;top:452px" width="6" height="6" viewBox="0 0 6 6"><path d="M0 0h5.500L0 5.500z" fill="#1a7a2e"/></svg>
<span class="t s" style="left:979.70px;top:455px;font-size:10.4px;line-height:14px;color:#000;transform:scaleX(0.9500);-webkit-text-stroke:.2px #000;">1191.40</span>
<svg style="left:978px;top:452px" width="6" height="6" viewBox="0 0 6 6"><path d="M0 0h5.500L0 5.500z" fill="#1a7a2e"/></svg>
<span class="t s" style="left:22.90px;top:473px;font-size:10.4px;line-height:14px;color:#000;transform:scaleX(0.9500);-webkit-text-stroke:.2px #000;">8</span>
<span class="t s" style="left:44.70px;top:473px;font-size:10.4px;line-height:14px;color:#000;transform:scaleX(0.9500);-webkit-text-stroke:.2px #000;">1</span>
<svg style="left:43px;top:470px" width="6" height="6" viewBox="0 0 6 6"><path d="M0 0h5.500L0 5.500z" fill="#1a7a2e"/></svg>
<span class="t s" style="left:69.70px;top:473px;font-size:10.4px;line-height:14px;color:#000;transform:scaleX(1.0240);-webkit-text-stroke:.2px #000;">01/12/2017</span>
<span class="t s" style="left:143.70px;top:473px;font-size:10.4px;line-height:14px;color:#000;transform:scaleX(0.9500);-webkit-text-stroke:.2px #000;">03</span>
<svg style="left:142px;top:470px" width="6" height="6" viewBox="0 0 6 6"><path d="M0 0h5.500L0 5.500z" fill="#1a7a2e"/></svg>
<span class="t s" style="left:185.70px;top:473px;font-size:10.4px;line-height:14px;color:#000;transform:scaleX(0.9500);-webkit-text-stroke:.2px #000;">0001</span>
<svg style="left:184px;top:470px" width="6" height="6" viewBox="0 0 6 6"><path d="M0 0h5.500L0 5.500z" fill="#1a7a2e"/></svg>
<span class="t s" style="left:235.70px;top:473px;font-size:10.4px;line-height:14px;color:#000;transform:scaleX(0.9500);-webkit-text-stroke:.2px #000;">4</span>
<span class="t s" style="left:332.70px;top:473px;font-size:10.4px;line-height:14px;color:#000;transform:scaleX(0.9500);-webkit-text-stroke:.2px #000;">0</span>
<span class="t s" style="left:361.70px;top:473px;font-size:10.4px;line-height:14px;color:#000;transform:scaleX(0.9500);-webkit-text-stroke:.2px #000;">0</span>
<svg style="left:360px;top:470px" width="6" height="6" viewBox="0 0 6 6"><path d="M0 0h5.500L0 5.500z" fill="#1a7a2e"/></svg>
<span class="t s" style="left:433.40px;top:473px;font-size:10.4px;line-height:14px;color:#000;transform:scaleX(1.0453);-webkit-text-stroke:.2px #000;">Clientes Varios</span>
<span class="t s" style="left:614.70px;top:473px;font-size:10.4px;line-height:14px;color:#000;transform:scaleX(0.9500);-webkit-text-stroke:.2px #000;">277.97</span>
<svg style="left:613px;top:470px" width="6" height="6" viewBox="0 0 6 6"><path d="M0 0h5.500L0 5.500z" fill="#1a7a2e"/></svg>
<span class="t s" style="left:686.70px;top:473px;font-size:10.4px;line-height:14px;color:#000;transform:scaleX(0.9500);-webkit-text-stroke:.2px #000;">0.00</span>
<svg style="left:685px;top:470px" width="6" height="6" viewBox="0 0 6 6"><path d="M0 0h5.500L0 5.500z" fill="#1a7a2e"/></svg>
<span class="t s" style="left:749.70px;top:473px;font-size:10.4px;line-height:14px;color:#000;transform:scaleX(0.9500);-webkit-text-stroke:.2px #000;">0.00</span>
<svg style="left:748px;top:470px" width="6" height="6" viewBox="0 0 6 6"><path d="M0 0h5.500L0 5.500z" fill="#1a7a2e"/></svg>
<span class="t s" style="left:812.70px;top:473px;font-size:10.4px;line-height:14px;color:#000;transform:scaleX(0.9500);-webkit-text-stroke:.2px #000;">0.00</span>
<svg style="left:811px;top:470px" width="6" height="6" viewBox="0 0 6 6"><path d="M0 0h5.500L0 5.500z" fill="#1a7a2e"/></svg>
<span class="t s" style="left:862.70px;top:473px;font-size:10.4px;line-height:14px;color:#000;transform:scaleX(0.9500);-webkit-text-stroke:.2px #000;">50.03</span>
<svg style="left:861px;top:470px" width="6" height="6" viewBox="0 0 6 6"><path d="M0 0h5.500L0 5.500z" fill="#1a7a2e"/></svg>
<span class="t s" style="left:917.70px;top:473px;font-size:10.4px;line-height:14px;color:#000;transform:scaleX(0.9500);-webkit-text-stroke:.2px #000;">0.00</span>
<svg style="left:916px;top:470px" width="6" height="6" viewBox="0 0 6 6"><path d="M0 0h5.500L0 5.500z" fill="#1a7a2e"/></svg>
<span class="t s" style="left:979.70px;top:473px;font-size:10.4px;line-height:14px;color:#000;transform:scaleX(0.9500);-webkit-text-stroke:.2px #000;">328.00</span>
<svg style="left:978px;top:470px" width="6" height="6" viewBox="0 0 6 6"><path d="M0 0h5.500L0 5.500z" fill="#1a7a2e"/></svg>
<span class="t s" style="left:22.90px;top:491px;font-size:10.4px;line-height:14px;color:#000;transform:scaleX(0.9500);-webkit-text-stroke:.2px #000;">9</span>
<span class="t s" style="left:44.70px;top:491px;font-size:10.4px;line-height:14px;color:#000;transform:scaleX(0.9500);-webkit-text-stroke:.2px #000;">1</span>
<svg style="left:43px;top:488px" width="6" height="6" viewBox="0 0 6 6"><path d="M0 0h5.500L0 5.500z" fill="#1a7a2e"/></svg>
<span class="t s" style="left:69.70px;top:491px;font-size:10.4px;line-height:14px;color:#000;transform:scaleX(1.0240);-webkit-text-stroke:.2px #000;">01/12/2017</span>
<span class="t s" style="left:143.70px;top:491px;font-size:10.4px;line-height:14px;color:#000;transform:scaleX(0.9500);-webkit-text-stroke:.2px #000;">01</span>
<svg style="left:142px;top:488px" width="6" height="6" viewBox="0 0 6 6"><path d="M0 0h5.500L0 5.500z" fill="#1a7a2e"/></svg>
<span class="t s" style="left:185.70px;top:491px;font-size:10.4px;line-height:14px;color:#000;transform:scaleX(0.9500);-webkit-text-stroke:.2px #000;">0001</span>
<svg style="left:184px;top:488px" width="6" height="6" viewBox="0 0 6 6"><path d="M0 0h5.500L0 5.500z" fill="#1a7a2e"/></svg>
<span class="t s" style="left:235.70px;top:491px;font-size:10.4px;line-height:14px;color:#000;transform:scaleX(0.9500);-webkit-text-stroke:.2px #000;">3</span>
<span class="t s" style="left:332.70px;top:491px;font-size:10.4px;line-height:14px;color:#000;transform:scaleX(0.9500);-webkit-text-stroke:.2px #000;">6</span>
<span class="t s" style="left:361.70px;top:491px;font-size:10.4px;line-height:14px;color:#000;transform:scaleX(0.9500);-webkit-text-stroke:.2px #000;">20102420706</span>
<svg style="left:360px;top:488px" width="6" height="6" viewBox="0 0 6 6"><path d="M0 0h5.500L0 5.500z" fill="#1a7a2e"/></svg>
<span class="t s" style="left:433.40px;top:491px;font-size:10.4px;line-height:14px;color:#000;transform:scaleX(0.9930);-webkit-text-stroke:.2px #000;">Comercial Fatmagul SAC</span>
<span class="t s" style="left:614.70px;top:491px;font-size:10.4px;line-height:14px;color:#000;transform:scaleX(0.9500);-webkit-text-stroke:.2px #000;">0.00</span>
<svg style="left:613px;top:488px" width="6" height="6" viewBox="0 0 6 6"><path d="M0 0h5.500L0 5.500z" fill="#1a7a2e"/></svg>
<span class="t s" style="left:686.70px;top:491px;font-size:10.4px;line-height:14px;color:#000;transform:scaleX(0.9500);-webkit-text-stroke:.2px #000;">300.00</span>
<svg style="left:685px;top:488px" width="6" height="6" viewBox="0 0 6 6"><path d="M0 0h5.500L0 5.500z" fill="#1a7a2e"/></svg>
<span class="t s" style="left:749.70px;top:491px;font-size:10.4px;line-height:14px;color:#000;transform:scaleX(0.9500);-webkit-text-stroke:.2px #000;">0.00</span>
<svg style="left:748px;top:488px" width="6" height="6" viewBox="0 0 6 6"><path d="M0 0h5.500L0 5.500z" fill="#1a7a2e"/></svg>
<span class="t s" style="left:812.70px;top:491px;font-size:10.4px;line-height:14px;color:#000;transform:scaleX(0.9500);-webkit-text-stroke:.2px #000;">0.00</span>
<svg style="left:811px;top:488px" width="6" height="6" viewBox="0 0 6 6"><path d="M0 0h5.500L0 5.500z" fill="#1a7a2e"/></svg>
<span class="t s" style="left:862.70px;top:491px;font-size:10.4px;line-height:14px;color:#000;transform:scaleX(0.9500);-webkit-text-stroke:.2px #000;">0.00</span>
<svg style="left:861px;top:488px" width="6" height="6" viewBox="0 0 6 6"><path d="M0 0h5.500L0 5.500z" fill="#1a7a2e"/></svg>
<span class="t s" style="left:917.70px;top:491px;font-size:10.4px;line-height:14px;color:#000;transform:scaleX(0.9500);-webkit-text-stroke:.2px #000;">0.00</span>
<svg style="left:916px;top:488px" width="6" height="6" viewBox="0 0 6 6"><path d="M0 0h5.500L0 5.500z" fill="#1a7a2e"/></svg>
<span class="t s" style="left:979.70px;top:491px;font-size:10.4px;line-height:14px;color:#000;transform:scaleX(0.9500);-webkit-text-stroke:.2px #000;">300.00</span>
<svg style="left:978px;top:488px" width="6" height="6" viewBox="0 0 6 6"><path d="M0 0h5.500L0 5.500z" fill="#1a7a2e"/></svg>
<span class="t s" style="left:22.90px;top:509px;font-size:10.4px;line-height:14px;color:#000;transform:scaleX(0.9500);-webkit-text-stroke:.2px #000;">10</span>
<span class="t s" style="left:44.70px;top:509px;font-size:10.4px;line-height:14px;color:#000;transform:scaleX(0.9500);-webkit-text-stroke:.2px #000;">1</span>
<svg style="left:43px;top:506px" width="6" height="6" viewBox="0 0 6 6"><path d="M0 0h5.500L0 5.500z" fill="#1a7a2e"/></svg>
<span class="t s" style="left:69.70px;top:509px;font-size:10.4px;line-height:14px;color:#000;transform:scaleX(1.0240);-webkit-text-stroke:.2px #000;">01/12/2017</span>
<span class="t s" style="left:143.70px;top:509px;font-size:10.4px;line-height:14px;color:#000;transform:scaleX(0.9500);-webkit-text-stroke:.2px #000;">01</span>
<svg style="left:142px;top:506px" width="6" height="6" viewBox="0 0 6 6"><path d="M0 0h5.500L0 5.500z" fill="#1a7a2e"/></svg>
<span class="t s" style="left:185.70px;top:509px;font-size:10.4px;line-height:14px;color:#000;transform:scaleX(0.9500);-webkit-text-stroke:.2px #000;">0001</span>
<svg style="left:184px;top:506px" width="6" height="6" viewBox="0 0 6 6"><path d="M0 0h5.500L0 5.500z" fill="#1a7a2e"/></svg>
<span class="t s" style="left:235.70px;top:509px;font-size:10.4px;line-height:14px;color:#000;transform:scaleX(0.9500);-webkit-text-stroke:.2px #000;">4</span>
<span class="t s" style="left:332.70px;top:509px;font-size:10.4px;line-height:14px;color:#000;transform:scaleX(0.9500);-webkit-text-stroke:.2px #000;">6</span>
<span class="t s" style="left:361.70px;top:509px;font-size:10.4px;line-height:14px;color:#000;transform:scaleX(0.9500);-webkit-text-stroke:.2px #000;">20102420706</span>
<svg style="left:360px;top:506px" width="6" height="6" viewBox="0 0 6 6"><path d="M0 0h5.500L0 5.500z" fill="#1a7a2e"/></svg>
<span class="t s" style="left:433.40px;top:509px;font-size:10.4px;line-height:14px;color:#000;transform:scaleX(0.9930);-webkit-text-stroke:.2px #000;">Comercial Fatmagul SAC</span>
<span class="t s" style="left:614.70px;top:509px;font-size:10.4px;line-height:14px;color:#000;transform:scaleX(0.9500);-webkit-text-stroke:.2px #000;">754.24</span>
<svg style="left:613px;top:506px" width="6" height="6" viewBox="0 0 6 6"><path d="M0 0h5.500L0 5.500z" fill="#1a7a2e"/></svg>
<span class="t s" style="left:686.70px;top:509px;font-size:10.4px;line-height:14px;color:#000;transform:scaleX(0.9500);-webkit-text-stroke:.2px #000;">0.00</span>
<svg style="left:685px;top:506px" width="6" height="6" viewBox="0 0 6 6"><path d="M0 0h5.500L0 5.500z" fill="#1a7a2e"/></svg>
<span class="t s" style="left:749.70px;top:509px;font-size:10.4px;line-height:14px;color:#000;transform:scaleX(0.9500);-webkit-text-stroke:.2px #000;">0.00</span>
<svg style="left:748px;top:506px" width="6" height="6" viewBox="0 0 6 6"><path d="M0 0h5.500L0 5.500z" fill="#1a7a2e"/></svg>
<span class="t s" style="left:812.70px;top:509px;font-size:10.4px;line-height:14px;color:#000;transform:scaleX(0.9500);-webkit-text-stroke:.2px #000;">0.00</span>
<svg style="left:811px;top:506px" width="6" height="6" viewBox="0 0 6 6"><path d="M0 0h5.500L0 5.500z" fill="#1a7a2e"/></svg>
<span class="t s" style="left:862.70px;top:509px;font-size:10.4px;line-height:14px;color:#000;transform:scaleX(0.9500);-webkit-text-stroke:.2px #000;">135.76</span>
<svg style="left:861px;top:506px" width="6" height="6" viewBox="0 0 6 6"><path d="M0 0h5.500L0 5.500z" fill="#1a7a2e"/></svg>
<span class="t s" style="left:917.70px;top:509px;font-size:10.4px;line-height:14px;color:#000;transform:scaleX(0.9500);-webkit-text-stroke:.2px #000;">0.00</span>
<svg style="left:916px;top:506px" width="6" height="6" viewBox="0 0 6 6"><path d="M0 0h5.500L0 5.500z" fill="#1a7a2e"/></svg>
<span class="t s" style="left:979.70px;top:509px;font-size:10.4px;line-height:14px;color:#000;transform:scaleX(0.9500);-webkit-text-stroke:.2px #000;">0.00</span>
<svg style="left:978px;top:506px" width="6" height="6" viewBox="0 0 6 6"><path d="M0 0h5.500L0 5.500z" fill="#1a7a2e"/></svg>
<div style="left:0px;top:620px;width:1208px;height:1px;background:#ababab;"></div>
<div style="left:130px;top:620px;width:100px;height:22px;background:#fff;"></div>
<div style="left:130px;top:641px;width:100px;height:2px;background:#217346;"></div>
<div style="left:129px;top:620px;width:1px;height:22px;background:#ababab;"></div>
<div style="left:230px;top:620px;width:1px;height:22px;background:#ababab;"></div>
<span class="t s" style="left:89.30px;top:626px;font-size:11.5px;line-height:15px;color:#444;transform:scaleX(0.8281);">INICIO</span>
<span class="t sb" style="left:139.20px;top:626px;font-size:11.5px;line-height:15px;color:#217346;transform:scaleX(0.8427);">CONTINGENCIAS</span>
<span class="t s" style="left:239.90px;top:626px;font-size:11.5px;line-height:15px;color:#444;transform:scaleX(0.7520);">EXTRAS</span>
<div style="left:79px;top:624px;width:1px;height:18px;background:#ababab;"></div>
<div style="left:285px;top:624px;width:1px;height:18px;background:#ababab;"></div>
<svg style="left:20px;top:628px" width="32" height="9" viewBox="0 0 32 9"><path d="M5.500 1.500L2.500 4.500l3 3zM25 1.500l3 3-3 3z" fill="#c2c2c2"/></svg>
<svg style="left:310px;top:625px" width="16" height="16" viewBox="0 0 16 16" fill="none" stroke="#6a6a6a"><circle cx="8" cy="7.800" r="6.200" stroke-width="1"/><path d="M8 4.600v6.400M4.800 7.800h6.400" stroke-width="1.400"/></svg>
<div style="left:735px;top:628px;width:1px;height:1px;background:#999;"></div>
<div style="left:735px;top:632px;width:1px;height:1px;background:#999;"></div>
<div style="left:735px;top:636px;width:1px;height:1px;background:#999;"></div>
<div style="left:749px;top:627px;width:12px;height:13px;background:#fff;border:1px solid #c0c0c0;box-sizing:border-box;"></div>
<svg style="left:752px;top:630px" width="6" height="8" viewBox="0 0 6 8"><path d="M4.800 0.800v6.400L1 4z" fill="#555"/></svg>
<div style="left:760px;top:627px;width:436px;height:13px;background:#fff;border:1px solid #c0c0c0;box-sizing:border-box;"></div>
<div style="left:1198px;top:627px;width:12px;height:13px;background:#fff;border:1px solid #c0c0c0;box-sizing:border-box;"></div>
<svg style="left:1201px;top:630px" width="6" height="8" viewBox="0 0 6 8"><path d="M1.200 0.800v6.400L5 4z" fill="#555"/></svg>
<div style="left:1210px;top:202px;width:13px;height:407px;background:#dcdcdc;"></div>
<div style="left:1211px;top:186px;width:11px;height:14px;background:#fff;border:1px solid #c0c0c0;box-sizing:border-box;"></div>
<svg style="left:1213px;top:189px" width="8" height="6" viewBox="0 0 8 6"><path d="M0.800 5h6.400L4 1.400z" fill="#666"/></svg>
<div style="left:1211px;top:200px;width:11px;height:92px;background:#fff;border:1px solid #c0c0c0;box-sizing:border-box;"></div>
<div style="left:1211px;top:609px;width:11px;height:12px;background:#fff;border:1px solid #c0c0c0;box-sizing:border-box;"></div>
<svg style="left:1213px;top:612px" width="8" height="6" viewBox="0 0 8 6"><path d="M0.500 1h7L4 5z" fill="#666"/></svg>
<div style="left:0px;top:645px;width:1226px;height:1px;background:#d6d6d6;"></div>
<span class="t s" style="left:6.60px;top:648px;font-size:10.5px;line-height:14px;color:#444;transform:scaleX(0.7309);">ALTERNATIVAS CONTABLES - VISITA:</span>
<span class="t s" style="left:145.80px;top:648px;font-size:10.5px;line-height:14px;color:#444;transform:scaleX(0.8853);">www.alternativacontable.com/tienda</span>
<span class="t s" style="left:297.90px;top:648px;font-size:10.5px;line-height:14px;color:#444;transform:scaleX(0.7831);">- MAYOR INFORMACIÓN:</span>
<span class="t s" style="left:399.20px;top:648px;font-size:10.5px;line-height:14px;color:#444;transform:scaleX(0.8716);">info@alternativacontable.com</span>
<div style="left:993px;top:646px;width:29px;height:18px;background:#c8c8c8;"></div>
<svg style="left:1001px;top:649px" width="12" height="12" viewBox="0 0 12 12" fill="none" stroke="#666" stroke-width="1"><rect x="0.500" y="0.500" width="10.500" height="10.500"/><path d="M4 .5v10.500M7.500 .5v10.500M.5 4h10.500M.5 7.500h10.500"/></svg>
<svg style="left:1031px;top:649px" width="12" height="12" viewBox="0 0 12 12" fill="none" stroke="#666" stroke-width="1"><rect x="0.500" y="0.500" width="10.500" height="10.500"/><rect x="3.500" y="3" width="4.500" height="5.500"/></svg>
<svg style="left:1061px;top:649px" width="12" height="12" viewBox="0 0 12 12" fill="none" stroke="#666" stroke-width="1"><rect x="0.500" y="0.500" width="10.500" height="10.500"/><path d="M3.500 .5v5.500h4V.5M.5 6h10.500"/></svg>
<div style="left:1085px;top:655px;width:5px;height:1px;background:#444;"></div>
<div style="left:1085px;top:656px;width:5px;height:1px;background:#444;"></div>
<div style="left:1093px;top:655px;width:78px;height:1px;background:#9a9a9a;"></div>
<div style="left:1131px;top:650px;width:3px;height:10px;background:#555;"></div>
<div style="left:1174px;top:655px;width:6px;height:1px;background:#444;"></div>
<div style="left:1176.5px;top:652.5px;width:1px;height:6px;background:#444;"></div>
<div style="left:1174px;top:656px;width:6px;height:1px;background:#444;"></div>
<span class="t s" style="left:1189.30px;top:648px;font-size:10px;line-height:13px;color:#444;transform:scaleX(0.7976);">100%</span>
<div style="left:0px;top:0px;width:1px;height:666px;background:#0f4528;"></div>
<div style="left:1225px;top:1px;width:1px;height:665px;background:#14552f;"></div>
<div style="left:0px;top:665px;width:1226px;height:1px;background:#14552f;"></div>
</body></html>
